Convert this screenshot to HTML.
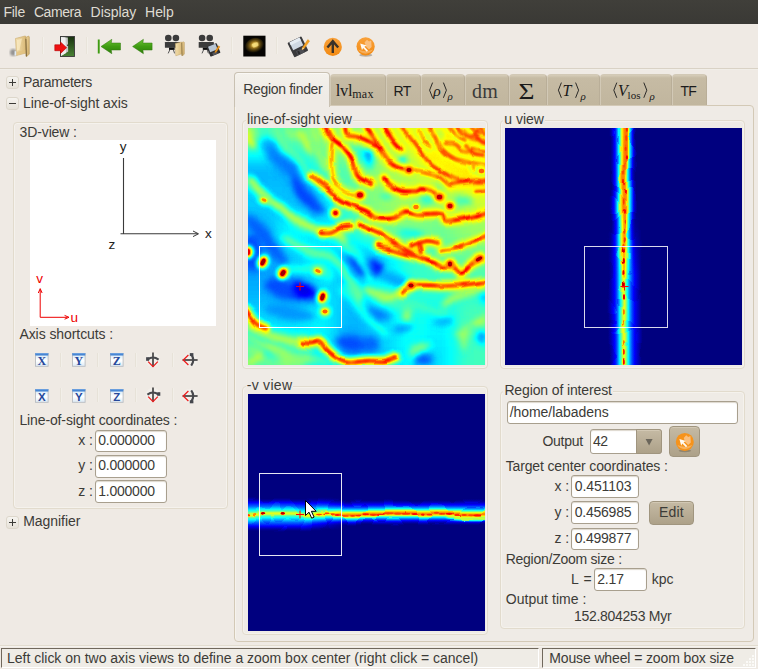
<!DOCTYPE html>
<html><head><meta charset="utf-8"><title>PyMSES</title>
<style>
html,body{margin:0;padding:0}
body{width:758px;height:669px;overflow:hidden;background:#efeae4;font-family:"Liberation Sans",sans-serif;font-size:14px;color:#3c3b37;position:relative}
div,svg{box-sizing:border-box}
.t{position:absolute;white-space:pre;line-height:16px;height:16px}
.abs{position:absolute}
.menubar{position:absolute;left:0;top:0;width:758px;height:24px;background:linear-gradient(#403f3a,#3a3935)}
.tbline{position:absolute;left:0;top:68px;width:758px;height:1px;background:#d9d2c5}
.tbline2{position:absolute;left:0;top:69px;width:758px;height:1px;background:#f1eee8}
.frame{position:absolute;border:1px solid #e2dbcd;border-radius:4px;box-shadow:inset 0 0 0 1px #f5f2ed}
.lblbg{position:absolute;background:#efeae4;height:4px}
.inp{position:absolute;background:#fff;border:1px solid #a89f8e;border-radius:3px;box-shadow:inset 0 1px 1px #ddd8ce}
.exp{position:absolute;width:13px;height:13px;border:1px solid #ddd7cb;border-radius:3px;background:linear-gradient(#f6f4f0,#e6e1d8)}
.exp:before{content:"";position:absolute;left:2px;top:5px;width:7px;height:1px;background:#3c3b37}
.exp.plus:after{content:"";position:absolute;left:5px;top:2px;width:1px;height:7px;background:#3c3b37}
.tab{position:absolute;top:74px;height:31px;background:linear-gradient(#d6cdb9 0,#c6bba4 3px,#c1b69e 100%);border:1px solid #d2c9b6;border-right-color:#b9ae98;border-bottom:none;border-radius:4px 4px 0 0}
.tabact{position:absolute;left:234px;top:72px;width:96px;height:35px;background:linear-gradient(#f4f1eb,#efebe6 70%);border:1px solid #c9c1b2;border-bottom:none;border-radius:4px 4px 0 0;box-shadow:inset 0 1px 0 #faf8f5}
.panel{position:absolute;left:234px;top:105px;width:520px;height:537px;background:#efebe6;border:1px solid #d3c9b6;border-radius:0 4px 4px 4px;box-shadow:inset 1px 0 0 #f6f3ed}
.btn{position:absolute;border:1px solid #a0957f;border-radius:4px;background:linear-gradient(#c5baa4,#ada189);box-shadow:inset 0 1px 0 #d2c8b4}
.sep{position:absolute;width:1px;height:14px;background:#e7e2d8;box-shadow:1px 0 0 #f2efe9}
.status{position:absolute;top:648px;height:20px;border:1px solid #70685c;border-right-color:#fff;border-bottom-color:#fff;background:#efece6}
.hl{position:absolute;left:0;width:758px;height:1px}
</style></head>
<body>

<svg width="0" height="0" style="position:absolute">
 <defs>
  <filter id="jet" x="0" y="0" width="100%" height="100%" color-interpolation-filters="sRGB">
   <feComponentTransfer>
    <feFuncR type="table" tableValues="0 0 0 0 0.5 1 1 1 0.5"/>
    <feFuncG type="table" tableValues="0 0 0.5 1 1 1 0.5 0 0"/>
    <feFuncB type="table" tableValues="0.5 1 1 1 0.5 0 0 0 0"/>
   </feComponentTransfer>
  </filter>
  <filter id="b9" filterUnits="userSpaceOnUse" x="-40" y="-40" width="320" height="320" color-interpolation-filters="sRGB"><feGaussianBlur stdDeviation="10"/></filter>
  <filter id="b6" filterUnits="userSpaceOnUse" x="-40" y="-40" width="320" height="320" color-interpolation-filters="sRGB"><feGaussianBlur stdDeviation="5.5"/></filter>
  <filter id="b4" filterUnits="userSpaceOnUse" x="-40" y="-40" width="320" height="320" color-interpolation-filters="sRGB"><feGaussianBlur stdDeviation="3.2"/></filter>
  <filter id="b2" filterUnits="userSpaceOnUse" x="-40" y="-40" width="320" height="320" color-interpolation-filters="sRGB"><feGaussianBlur stdDeviation="2.0"/></filter>
  <filter id="b1" filterUnits="userSpaceOnUse" x="-40" y="-40" width="320" height="320" color-interpolation-filters="sRGB"><feGaussianBlur stdDeviation="1.0"/></filter>
  <filter id="b05" filterUnits="userSpaceOnUse" x="-40" y="-40" width="320" height="320" color-interpolation-filters="sRGB"><feGaussianBlur stdDeviation="0.7"/></filter>
  <filter id="wob" filterUnits="userSpaceOnUse" x="-40" y="-40" width="320" height="320" color-interpolation-filters="sRGB">
   <feTurbulence type="fractalNoise" baseFrequency="0.05" numOctaves="2" seed="4" result="n"/>
   <feDisplacementMap in="SourceGraphic" in2="n" scale="5" xChannelSelector="R" yChannelSelector="G" result="d"/>
   <feGaussianBlur in="d" stdDeviation="0.55"/>
  </filter>
  <filter id="wob2" filterUnits="userSpaceOnUse" x="-40" y="-40" width="320" height="320" color-interpolation-filters="sRGB">
   <feTurbulence type="fractalNoise" baseFrequency="0.03" numOctaves="2" seed="12" result="n"/>
   <feDisplacementMap in="SourceGraphic" in2="n" scale="10" xChannelSelector="R" yChannelSelector="G" result="d"/>
   <feGaussianBlur in="d" stdDeviation="0.8"/>
  </filter>
  <filter id="wob3" filterUnits="userSpaceOnUse" x="-40" y="-40" width="320" height="320" color-interpolation-filters="sRGB">
   <feTurbulence type="fractalNoise" baseFrequency="0.045" numOctaves="2" seed="21" result="n"/>
   <feDisplacementMap in="SourceGraphic" in2="n" scale="5" xChannelSelector="R" yChannelSelector="G" result="d"/>
   <feGaussianBlur in="d" stdDeviation="0.5"/>
  </filter>
  <filter id="mod" filterUnits="userSpaceOnUse" x="-40" y="-40" width="320" height="320" color-interpolation-filters="sRGB">
   <feTurbulence type="fractalNoise" baseFrequency="0.09" numOctaves="2" seed="9" result="n"/>
   <feColorMatrix in="n" type="matrix" values="0 0 0 0 1  0 0 0 0 1  0 0 0 0 1  3.2 0 0 0 -0.95" result="a"/>
   <feComposite in="SourceGraphic" in2="a" operator="in" result="c"/>
   <feGaussianBlur in="c" stdDeviation="0.9"/>
  </filter>
 </defs>
</svg>
<div class="menubar"></div>
<div class="tbline"></div><div class="tbline2"></div>
<svg width="400" height="44" viewBox="0 24 400 44" style="position:absolute;left:0;top:24px"><defs>
    <linearGradient id="fold" x1="0" y1="0" x2="1" y2="0"><stop offset="0" stop-color="#f3dfae"/><stop offset="1" stop-color="#d9b978"/></linearGradient>
    <linearGradient id="fold2" x1="0" y1="0" x2="1" y2="1"><stop offset="0" stop-color="#efd49a"/><stop offset="1" stop-color="#c9a765"/></linearGradient>
    <linearGradient id="door" x1="0" y1="0" x2="0" y2="1"><stop offset="0" stop-color="#17300f"/><stop offset="1" stop-color="#4a8335"/></linearGradient>
    <linearGradient id="garrow" x1="0" y1="0" x2="0" y2="1"><stop offset="0" stop-color="#6cc235"/><stop offset="0.5" stop-color="#3f9c12"/><stop offset="1" stop-color="#2f7d0c"/></linearGradient>
    <radialGradient id="gal" cx="0.5" cy="0.45" r="0.5"><stop offset="0" stop-color="#e2bd48"/><stop offset="0.35" stop-color="#a57d20"/><stop offset="0.7" stop-color="#4a380c"/><stop offset="1" stop-color="#0a0803"/></radialGradient>
    <linearGradient id="org" x1="0" y1="0" x2="0" y2="1"><stop offset="0" stop-color="#f9a13a"/><stop offset="1" stop-color="#f28a12"/></linearGradient>
    <filter id="tb05"><feGaussianBlur stdDeviation="0.5"/></filter>
    <filter id="tb1"><feGaussianBlur stdDeviation="1"/></filter>
    </defs><path d="M42.5 37v17" stroke="#e9e4da" stroke-width="1"/><path d="M43.5 37v17" stroke="#f3f0ea" stroke-width="1"/><path d="M86.5 37v17" stroke="#e9e4da" stroke-width="1"/><path d="M87.5 37v17" stroke="#f3f0ea" stroke-width="1"/><path d="M231.5 37v17" stroke="#e9e4da" stroke-width="1"/><path d="M232.5 37v17" stroke="#f3f0ea" stroke-width="1"/><path d="M276.5 37v17" stroke="#e9e4da" stroke-width="1"/><path d="M277.5 37v17" stroke="#f3f0ea" stroke-width="1"/><g><ellipse cx="13.2" cy="52.5" rx="3.2" ry="3.4" fill="#777" opacity=".75" filter="url(#tb1)"/><path d="M15.5 38.5 L25 36 L26 36.5 L26 53 L16.5 55.5 Z" fill="url(#fold)" stroke="#c9a96a" stroke-width=".6"/><path d="M26 37.5 L28.5 36 L29.3 37 L29.3 54 L26.5 56.8 L26 56 Z" fill="url(#fold2)" stroke="#b99855" stroke-width=".6"/><path d="M16.2 52 L25.5 49.8 L25.7 53 L16.6 55.2Z" fill="#e2c27f" opacity=".8"/><path d="M25.9 38.8 L26.4 56.4" stroke="#6e5a33" stroke-width=".9"/><path d="M17 40 L22 38.6 L19.5 50 L17 50.6Z" fill="#fff3cf" opacity=".55"/><rect x="14.6" y="51.2" width="1.6" height="4" fill="#dfeaf5"/></g><g><rect x="60.5" y="36.5" width="14" height="20" fill="url(#door)" stroke="#3a3a3a" stroke-width=".9"/><path d="M61 37 L67.8 37.6 L68.2 51.6 L61 56Z" fill="#c9c9c9"/><path d="M61 37 L65.5 37.4 L66 53 L61 56Z" fill="#efefef"/><path d="M67.2 44.5h1.2v1.6h-1.2z" fill="#333"/><path d="M54.8 44.8 H60.5 V42 L66.6 47.7 L60.5 53.5 V50.7 H54.8Z" fill="#ee1111" stroke="#b50000" stroke-width=".6"/></g><rect x="97.8" y="39.5" width="1.9" height="14" fill="#3f9c12"/><path d="M101 46.5 L111.8 39.3 L111.3 43 L120.5 43 L120.5 50 L111.3 50 L111.8 53.7Z" fill="url(#garrow)" stroke="#2e7a0c" stroke-width=".5"/><path d="M132.6 46.5 L143.4 39.3 L142.9 43 L152.1 43 L152.1 50 L142.9 50 L143.4 53.7Z" fill="url(#garrow)" stroke="#2e7a0c" stroke-width=".5"/><g fill="#3b3b3b"><circle cx="168.3" cy="38" r="3.3"/><circle cx="175.9" cy="38" r="3.3"/><rect x="164.9" y="42" width="15.2" height="5.8" rx=".6"/><rect x="169" y="47.6" width="5.6" height="2.3" fill="#0c0c0c"/><path d="M169.8 49.8 l-1.6 3.6 M173.4 49.8 l1.2 3.6" stroke="#555" stroke-width="1" fill="none"/></g><path d="M175.4 43.4 L181.6 42 L181.9 53.8 L175.8 55.8Z" fill="url(#fold)" stroke="#c2a05e" stroke-width=".5"/><path d="M181.8 42.6 L183.6 41.8 L184.3 42.5 L184.3 54 L182.4 56 L181.9 55.4Z" fill="url(#fold2)" stroke="#b39250" stroke-width=".5"/><path d="M181.8 42.8 L182.1 55.6" stroke="#7a653a" stroke-width=".7"/><g fill="#3b3b3b"><circle cx="202.1" cy="38" r="3.3"/><circle cx="209.7" cy="38" r="3.3"/><rect x="198.7" y="42" width="15.2" height="5.8" rx=".6"/><rect x="202.8" y="47.6" width="5.6" height="2.3" fill="#0c0c0c"/><path d="M203.6 49.8 l-1.6 3.6 M207.2 49.8 l1.2 3.6" stroke="#555" stroke-width="1" fill="none"/></g><g transform="rotate(-22 213.5 50)"><rect x="208.2" y="44.6" width="10.8" height="10.6" rx=".8" fill="#2e2e30"/><rect x="209.6" y="45" width="8" height="5.8" fill="#b9c6d4"/><rect x="211.2" y="52.4" width="5" height="2.6" fill="#55565a"/></g><path d="M218.6 45.8 L219.9 46.8 L216.4 52 L214.9 52.8 L215.2 51.1Z" fill="#f39a1c" stroke="#c77508" stroke-width=".4"/><rect x="243.3" y="35.7" width="22.2" height="20.8" fill="#050402"/><ellipse cx="254.6" cy="45.6" rx="9.6" ry="7.6" fill="url(#gal)" transform="rotate(-18 254.6 45.6)"/><ellipse cx="255" cy="44.9" rx="3.4" ry="2.3" fill="#ffe98a" opacity=".8" filter="url(#tb05)" transform="rotate(-20 254.8 44.4)"/><g transform="rotate(-26 298 47)"><rect x="290.2" y="38.8" width="15.5" height="16" rx="1" fill="#3a3a3c"/><rect x="292.3" y="39.2" width="11.2" height="8.6" fill="#cfd8e2"/><rect x="292.3" y="39.2" width="11.2" height="3" fill="#e6ecf2"/><rect x="294.2" y="50" width="7.5" height="4.6" fill="#4e4f54"/><rect x="295.3" y="50.7" width="2" height="3.3" fill="#2c2c2e"/></g><path d="M307.8 39.6 L309.6 41 L304.2 48.6 L302 49.8 L302.5 47.4Z" fill="#f5a021" stroke="#d98a10" stroke-width=".4"/><path d="M302 49.8 L302.5 47.4 L304.2 48.6Z" fill="#f7d9a0"/><circle cx="332.8" cy="46.9" r="9.1" fill="url(#org)"/><path d="M327.4 47.6 L332.8 41.2 L338.2 47.6 M332.8 42 V53" stroke="#3b3228" stroke-width="2.4" fill="none" stroke-linecap="butt" stroke-linejoin="miter"/><ellipse cx="365.8" cy="55.2" rx="6.5" ry="1.6" fill="#8a8175" opacity=".55" filter="url(#tb05)"/><circle cx="365.6" cy="46.4" r="9.1" fill="url(#org)"/><path d="M364.5 42.5 L367 39.8 L369 41.6 L371.2 40.6 L371.6 47 L369 49.6 L366 46.4Z" fill="#fbc48a" opacity=".9"/><path d="M358.2 49.5 a8.6 8.6 0 0 0 14.8 0 q-7.4 3.4 -14.8 0z" fill="#fff" opacity=".28"/><path d="M360.2 43.4 L366.6 45.5 L364.4 46.7 L368 50.6 L366.8 51.8 L363.1 48 L362 50.3Z" fill="#fff" opacity=".95"/></svg>
<div class="exp plus" style="left:6px;top:76px"></div>
<div class="exp" style="left:6px;top:97px"></div>
<div class="exp plus" style="left:6px;top:516px"></div>
<div class="frame" style="left:13px;top:122px;width:215px;height:387px;"></div>
<div class="abs" style="left:30px;top:140.4px;width:186px;height:185.9px;background:#fff"></div>
<svg class="abs" style="left:30px;top:140px" width="187" height="187" viewBox="30 140 187 187">
<path d="M123.5 158V234M120.5 233.8H198" stroke="#3a3a3a" stroke-width="1.1" fill="none"/>
<path d="M193 231 L198.5 233.8 L193 236.6" stroke="#3a3a3a" stroke-width="1" fill="none"/>
<g font-family="Liberation Sans" font-size="13.5" fill="#222">
<text x="119.8" y="151.2">y</text><text x="205" y="238">x</text><text x="108.6" y="248.8">z</text>
<text x="36.2" y="283" fill="#ee0000">v</text><text x="70.6" y="322.2" fill="#ee0000">u</text></g>
<path d="M40.2 290V317.3H67.5" stroke="#ee0000" stroke-width="1" fill="none"/>
<path d="M38.3 293 L40.2 288.6 L42.1 293M64.6 315.4 L69 317.3 L64.6 319.2" stroke="#ee0000" stroke-width="1" fill="none"/>
</svg>
<svg width="14" height="14" viewBox="0 0 14 14" style="position:absolute;left:35px;top:353px"><defs><linearGradient id="xyzg" x1="0" y1="0" x2="0" y2="1"><stop offset="0" stop-color="#cfe6f7"/><stop offset=".55" stop-color="#ffffff"/><stop offset="1" stop-color="#dbeaf6"/></linearGradient></defs><rect x=".5" y=".5" width="12.6" height="12.8" fill="url(#xyzg)" stroke="#b9bcc0" stroke-width=".9"/><rect x=".3" y=".2" width="13" height="2.3" fill="#3f7fd0"/><rect x=".3" y=".2" width="13" height="1" fill="#6ea3e2"/><text x="6.8" y="11.9" text-anchor="middle" font-family="Liberation Serif" font-weight="bold" font-size="12" fill="#27489a">X</text></svg>
<svg width="14" height="14" viewBox="0 0 14 14" style="position:absolute;left:72.3px;top:353px"><defs><linearGradient id="xyzg" x1="0" y1="0" x2="0" y2="1"><stop offset="0" stop-color="#cfe6f7"/><stop offset=".55" stop-color="#ffffff"/><stop offset="1" stop-color="#dbeaf6"/></linearGradient></defs><rect x=".5" y=".5" width="12.6" height="12.8" fill="url(#xyzg)" stroke="#b9bcc0" stroke-width=".9"/><rect x=".3" y=".2" width="13" height="2.3" fill="#3f7fd0"/><rect x=".3" y=".2" width="13" height="1" fill="#6ea3e2"/><text x="6.8" y="11.9" text-anchor="middle" font-family="Liberation Serif" font-weight="bold" font-size="12" fill="#27489a">Y</text></svg>
<svg width="14" height="14" viewBox="0 0 14 14" style="position:absolute;left:109.6px;top:353px"><defs><linearGradient id="xyzg" x1="0" y1="0" x2="0" y2="1"><stop offset="0" stop-color="#cfe6f7"/><stop offset=".55" stop-color="#ffffff"/><stop offset="1" stop-color="#dbeaf6"/></linearGradient></defs><rect x=".5" y=".5" width="12.6" height="12.8" fill="url(#xyzg)" stroke="#b9bcc0" stroke-width=".9"/><rect x=".3" y=".2" width="13" height="2.3" fill="#3f7fd0"/><rect x=".3" y=".2" width="13" height="1" fill="#6ea3e2"/><text x="6.8" y="11.9" text-anchor="middle" font-family="Liberation Serif" font-weight="bold" font-size="12" fill="#27489a">Z</text></svg>
<svg width="18" height="18" viewBox="-9 -9 18 18" style="position:absolute;left:144.3px;top:350.8px"><circle cx="0" cy="0" r="7.3" fill="#f4f1ec" opacity=".7"/><path d="M0 -7.6V6.8" stroke="#2c2c2c" stroke-width="1.5"/><path d="M-5.6 -0.4 Q0 -4.6 5.6 -0.4" stroke="#47484c" stroke-width="2.1" fill="none"/><rect x="-6.9" y="-2.8" width="3" height="3.6" fill="#44464c"/><path d="M-4.8 1.6 L0 6.6 L4.8 1.6" stroke="#ee1c1c" stroke-width="1.25" fill="none"/></svg>
<svg width="18" height="18" viewBox="-9 -9 18 18" style="position:absolute;left:181.3px;top:351px"><circle cx="0" cy="0" r="7.3" fill="#f4f1ec" opacity=".7"/><path d="M-7.4 0H7.6" stroke="#2c2c2c" stroke-width="1.5"/><path d="M1.2 -5.6 Q5.4 0 1.2 5.6" stroke="#47484c" stroke-width="2.1" fill="none"/><rect x="-0.2" y="-6.9" width="3.6" height="3" fill="#44464c"/><path d="M-1.6 -5 L-6.8 0 L-1.6 5" stroke="#ee1c1c" stroke-width="1.25" fill="none"/></svg>
<div class="sep" style="left:59.5px;top:352.8px"></div>
<div class="sep" style="left:96.8px;top:352.8px"></div>
<div class="sep" style="left:134.5px;top:352.8px"></div>
<div class="sep" style="left:171.7px;top:352.8px"></div>
<svg width="14" height="14" viewBox="0 0 14 14" style="position:absolute;left:35px;top:388.6px"><defs><linearGradient id="xyzg" x1="0" y1="0" x2="0" y2="1"><stop offset="0" stop-color="#cfe6f7"/><stop offset=".55" stop-color="#ffffff"/><stop offset="1" stop-color="#dbeaf6"/></linearGradient></defs><rect x=".5" y=".5" width="12.6" height="12.8" fill="url(#xyzg)" stroke="#b9bcc0" stroke-width=".9"/><rect x=".3" y=".2" width="13" height="2.3" fill="#3f7fd0"/><rect x=".3" y=".2" width="13" height="1" fill="#6ea3e2"/><text x="6.8" y="11.9" text-anchor="middle" font-family="Liberation Sans" font-weight="bold" font-size="11.5" fill="#27489a">X</text></svg>
<svg width="14" height="14" viewBox="0 0 14 14" style="position:absolute;left:72.3px;top:388.6px"><defs><linearGradient id="xyzg" x1="0" y1="0" x2="0" y2="1"><stop offset="0" stop-color="#cfe6f7"/><stop offset=".55" stop-color="#ffffff"/><stop offset="1" stop-color="#dbeaf6"/></linearGradient></defs><rect x=".5" y=".5" width="12.6" height="12.8" fill="url(#xyzg)" stroke="#b9bcc0" stroke-width=".9"/><rect x=".3" y=".2" width="13" height="2.3" fill="#3f7fd0"/><rect x=".3" y=".2" width="13" height="1" fill="#6ea3e2"/><text x="6.8" y="11.9" text-anchor="middle" font-family="Liberation Sans" font-weight="bold" font-size="11.5" fill="#27489a">Y</text></svg>
<svg width="14" height="14" viewBox="0 0 14 14" style="position:absolute;left:109.6px;top:388.6px"><defs><linearGradient id="xyzg" x1="0" y1="0" x2="0" y2="1"><stop offset="0" stop-color="#cfe6f7"/><stop offset=".55" stop-color="#ffffff"/><stop offset="1" stop-color="#dbeaf6"/></linearGradient></defs><rect x=".5" y=".5" width="12.6" height="12.8" fill="url(#xyzg)" stroke="#b9bcc0" stroke-width=".9"/><rect x=".3" y=".2" width="13" height="2.3" fill="#3f7fd0"/><rect x=".3" y=".2" width="13" height="1" fill="#6ea3e2"/><text x="6.8" y="11.9" text-anchor="middle" font-family="Liberation Sans" font-weight="bold" font-size="11.5" fill="#27489a">Z</text></svg>
<svg width="18" height="18" viewBox="-9 -9 18 18" style="position:absolute;left:144.3px;top:386.4px"><circle cx="0" cy="0" r="7.3" fill="#f4f1ec" opacity=".7"/><path d="M0 -7.6V6.8" stroke="#2c2c2c" stroke-width="1.5"/><path d="M-5.6 -0.4 Q0 -4.6 5.6 -0.4" stroke="#47484c" stroke-width="2.1" fill="none"/><rect x="4.3" y="-2.8" width="3" height="3.6" fill="#44464c"/><path d="M-4.8 1.6 L0 6.6 L4.8 1.6" stroke="#ee1c1c" stroke-width="1.25" fill="none"/></svg>
<svg width="18" height="18" viewBox="-9 -9 18 18" style="position:absolute;left:181.3px;top:386.6px"><circle cx="0" cy="0" r="7.3" fill="#f4f1ec" opacity=".7"/><path d="M-7.4 0H7.6" stroke="#2c2c2c" stroke-width="1.5"/><path d="M1.2 -5.6 Q5.4 0 1.2 5.6" stroke="#47484c" stroke-width="2.1" fill="none"/><rect x="-0.2" y="4.3" width="3.6" height="3" fill="#44464c"/><path d="M-1.6 -5 L-6.8 0 L-1.6 5" stroke="#ee1c1c" stroke-width="1.25" fill="none"/></svg>
<div class="sep" style="left:59.5px;top:388.4px"></div>
<div class="sep" style="left:96.8px;top:388.4px"></div>
<div class="sep" style="left:134.5px;top:388.4px"></div>
<div class="sep" style="left:171.7px;top:388.4px"></div>
<div class="inp" style="left:94.8px;top:429.8px;width:72px;height:22.7px;"></div>
<div class="inp" style="left:94.8px;top:455px;width:72px;height:22.7px;"></div>
<div class="inp" style="left:94.8px;top:480.2px;width:72px;height:22.7px;"></div>
<div class="panel"></div>
<div class="tab" style="left:329.5px;width:56.5px"></div>
<div class="tab" style="left:385.5px;width:35.8px"></div>
<div class="tab" style="left:420.8px;width:44.2px"></div>
<div class="tab" style="left:464.5px;width:44.8px"></div>
<div class="tab" style="left:508.8px;width:38.7px"></div>
<div class="tab" style="left:547px;width:53.3px"></div>
<div class="tab" style="left:599.8px;width:72.4px"></div>
<div class="tab" style="left:671.7px;width:35.1px"></div>
<div class="tabact"></div>
<svg class="abs" style="left:330px;top:74px" width="380" height="32" viewBox="330 74 380 32">
<g font-family="Liberation Serif" fill="#1a1a1a">
<text x="335.8" y="96" font-size="16.5" letter-spacing="-0.35">lvl</text><text x="352.2" y="98.2" font-size="12" letter-spacing="0.35">max</text>
<text x="433.2" y="95.5" font-size="15.5" font-style="italic">ρ</text><text x="447.6" y="99.6" font-size="11" font-style="italic">ρ</text>
<text x="472" y="97.8" font-size="20" letter-spacing="0.2" fill="#3a3a3a">dm</text>
<text x="518.6" y="98.6" font-size="22.5" textLength="16" lengthAdjust="spacingAndGlyphs">Σ</text>
<text x="562.6" y="96" font-size="16" font-style="italic">T</text><text x="580.6" y="99.6" font-size="11" font-style="italic">ρ</text>
<text x="618" y="96" font-size="16" font-style="italic">V</text><text x="627.6" y="98.6" font-size="11">los</text><text x="649.4" y="99.6" font-size="11" font-style="italic">ρ</text>
</g>
<g stroke="#1a1a1a" stroke-width="0.9" fill="none">
<path d="M432.6 82.6 L429.6 90.2 L432.6 97.8"/><path d="M443.4 82.6 L446.4 90.2 L443.4 97.8"/>
<path d="M561.4 82.6 L558.4 90.2 L561.4 97.8"/><path d="M575.6 82.6 L578.6 90.2 L575.6 97.8"/>
<path d="M616.8 82.6 L613.8 90.2 L616.8 97.8"/><path d="M643.8 82.6 L646.8 90.2 L643.8 97.8"/>
</g></svg>
<div class="frame" style="left:242px;top:120px;width:246px;height:249px;"></div>
<div class="frame" style="left:500px;top:120px;width:245px;height:249px;"></div>
<div class="frame" style="left:242px;top:386px;width:246px;height:249px;"></div>
<div class="frame" style="left:500px;top:391px;width:245px;height:237.5px;"></div>
<div class="abs" style="left:246px;top:119px;width:107px;height:6px;background:#efebe6"></div>
<div class="abs" style="left:503px;top:119px;width:42px;height:6px;background:#efebe6"></div>
<div class="abs" style="left:246px;top:384px;width:47px;height:6px;background:#efebe6"></div>
<div class="abs" style="left:503px;top:389px;width:110px;height:6px;background:#efebe6"></div>
<div class="abs" style="left:248px;top:128px;width:237px;height:237px;overflow:hidden"><svg width="237" height="237" viewBox="0 0 237 237" style="display:block"><g filter="url(#jet)"><rect width="237" height="237" fill="#6b6b6b"/><g filter="url(#b9)"><rect x="-30.1" y="-30.1" width="30.6" height="30.6" fill="#707070"/><rect x="-0.5" y="-30.1" width="30.6" height="30.6" fill="#707070"/><rect x="29.1" y="-30.1" width="30.6" height="30.6" fill="#737373"/><rect x="58.8" y="-30.1" width="30.6" height="30.6" fill="#808080"/><rect x="88.4" y="-30.1" width="30.6" height="30.6" fill="#858585"/><rect x="118.0" y="-30.1" width="30.6" height="30.6" fill="#8c8c8c"/><rect x="147.6" y="-30.1" width="30.6" height="30.6" fill="#999999"/><rect x="177.2" y="-30.1" width="30.6" height="30.6" fill="#a8a8a8"/><rect x="206.9" y="-30.1" width="30.6" height="30.6" fill="#b8b8b8"/><rect x="236.5" y="-30.1" width="30.6" height="30.6" fill="#b8b8b8"/><rect x="-30.1" y="-0.5" width="30.6" height="30.6" fill="#707070"/><rect x="-0.5" y="-0.5" width="30.6" height="30.6" fill="#707070"/><rect x="29.1" y="-0.5" width="30.6" height="30.6" fill="#737373"/><rect x="58.8" y="-0.5" width="30.6" height="30.6" fill="#808080"/><rect x="88.4" y="-0.5" width="30.6" height="30.6" fill="#858585"/><rect x="118.0" y="-0.5" width="30.6" height="30.6" fill="#8c8c8c"/><rect x="147.6" y="-0.5" width="30.6" height="30.6" fill="#999999"/><rect x="177.2" y="-0.5" width="30.6" height="30.6" fill="#a8a8a8"/><rect x="206.9" y="-0.5" width="30.6" height="30.6" fill="#b8b8b8"/><rect x="236.5" y="-0.5" width="30.6" height="30.6" fill="#b8b8b8"/><rect x="-30.1" y="29.1" width="30.6" height="30.6" fill="#4c4c4c"/><rect x="-0.5" y="29.1" width="30.6" height="30.6" fill="#4c4c4c"/><rect x="29.1" y="29.1" width="30.6" height="30.6" fill="#4f4f4f"/><rect x="58.8" y="29.1" width="30.6" height="30.6" fill="#6b6b6b"/><rect x="88.4" y="29.1" width="30.6" height="30.6" fill="#7a7a7a"/><rect x="118.0" y="29.1" width="30.6" height="30.6" fill="#858585"/><rect x="147.6" y="29.1" width="30.6" height="30.6" fill="#8f8f8f"/><rect x="177.2" y="29.1" width="30.6" height="30.6" fill="#9c9c9c"/><rect x="206.9" y="29.1" width="30.6" height="30.6" fill="#a8a8a8"/><rect x="236.5" y="29.1" width="30.6" height="30.6" fill="#a8a8a8"/><rect x="-30.1" y="58.8" width="30.6" height="30.6" fill="#545454"/><rect x="-0.5" y="58.8" width="30.6" height="30.6" fill="#545454"/><rect x="29.1" y="58.8" width="30.6" height="30.6" fill="#4f4f4f"/><rect x="58.8" y="58.8" width="30.6" height="30.6" fill="#545454"/><rect x="88.4" y="58.8" width="30.6" height="30.6" fill="#737373"/><rect x="118.0" y="58.8" width="30.6" height="30.6" fill="#858585"/><rect x="147.6" y="58.8" width="30.6" height="30.6" fill="#8a8a8a"/><rect x="177.2" y="58.8" width="30.6" height="30.6" fill="#878787"/><rect x="206.9" y="58.8" width="30.6" height="30.6" fill="#949494"/><rect x="236.5" y="58.8" width="30.6" height="30.6" fill="#949494"/><rect x="-30.1" y="88.4" width="30.6" height="30.6" fill="#4c4c4c"/><rect x="-0.5" y="88.4" width="30.6" height="30.6" fill="#4c4c4c"/><rect x="29.1" y="88.4" width="30.6" height="30.6" fill="#636363"/><rect x="58.8" y="88.4" width="30.6" height="30.6" fill="#575757"/><rect x="88.4" y="88.4" width="30.6" height="30.6" fill="#6b6b6b"/><rect x="118.0" y="88.4" width="30.6" height="30.6" fill="#7a7a7a"/><rect x="147.6" y="88.4" width="30.6" height="30.6" fill="#808080"/><rect x="177.2" y="88.4" width="30.6" height="30.6" fill="#7a7a7a"/><rect x="206.9" y="88.4" width="30.6" height="30.6" fill="#858585"/><rect x="236.5" y="88.4" width="30.6" height="30.6" fill="#858585"/><rect x="-30.1" y="118.0" width="30.6" height="30.6" fill="#474747"/><rect x="-0.5" y="118.0" width="30.6" height="30.6" fill="#474747"/><rect x="29.1" y="118.0" width="30.6" height="30.6" fill="#525252"/><rect x="58.8" y="118.0" width="30.6" height="30.6" fill="#616161"/><rect x="88.4" y="118.0" width="30.6" height="30.6" fill="#474747"/><rect x="118.0" y="118.0" width="30.6" height="30.6" fill="#525252"/><rect x="147.6" y="118.0" width="30.6" height="30.6" fill="#6b6b6b"/><rect x="177.2" y="118.0" width="30.6" height="30.6" fill="#737373"/><rect x="206.9" y="118.0" width="30.6" height="30.6" fill="#7a7a7a"/><rect x="236.5" y="118.0" width="30.6" height="30.6" fill="#7a7a7a"/><rect x="-30.1" y="147.6" width="30.6" height="30.6" fill="#4c4c4c"/><rect x="-0.5" y="147.6" width="30.6" height="30.6" fill="#4c4c4c"/><rect x="29.1" y="147.6" width="30.6" height="30.6" fill="#424242"/><rect x="58.8" y="147.6" width="30.6" height="30.6" fill="#595959"/><rect x="88.4" y="147.6" width="30.6" height="30.6" fill="#525252"/><rect x="118.0" y="147.6" width="30.6" height="30.6" fill="#666666"/><rect x="147.6" y="147.6" width="30.6" height="30.6" fill="#6b6b6b"/><rect x="177.2" y="147.6" width="30.6" height="30.6" fill="#6b6b6b"/><rect x="206.9" y="147.6" width="30.6" height="30.6" fill="#6b6b6b"/><rect x="236.5" y="147.6" width="30.6" height="30.6" fill="#6b6b6b"/><rect x="-30.1" y="177.2" width="30.6" height="30.6" fill="#575757"/><rect x="-0.5" y="177.2" width="30.6" height="30.6" fill="#575757"/><rect x="29.1" y="177.2" width="30.6" height="30.6" fill="#545454"/><rect x="58.8" y="177.2" width="30.6" height="30.6" fill="#5e5e5e"/><rect x="88.4" y="177.2" width="30.6" height="30.6" fill="#4c4c4c"/><rect x="118.0" y="177.2" width="30.6" height="30.6" fill="#575757"/><rect x="147.6" y="177.2" width="30.6" height="30.6" fill="#666666"/><rect x="177.2" y="177.2" width="30.6" height="30.6" fill="#5e5e5e"/><rect x="206.9" y="177.2" width="30.6" height="30.6" fill="#737373"/><rect x="236.5" y="177.2" width="30.6" height="30.6" fill="#737373"/><rect x="-30.1" y="206.9" width="30.6" height="30.6" fill="#757575"/><rect x="-0.5" y="206.9" width="30.6" height="30.6" fill="#757575"/><rect x="29.1" y="206.9" width="30.6" height="30.6" fill="#707070"/><rect x="58.8" y="206.9" width="30.6" height="30.6" fill="#616161"/><rect x="88.4" y="206.9" width="30.6" height="30.6" fill="#474747"/><rect x="118.0" y="206.9" width="30.6" height="30.6" fill="#525252"/><rect x="147.6" y="206.9" width="30.6" height="30.6" fill="#616161"/><rect x="177.2" y="206.9" width="30.6" height="30.6" fill="#595959"/><rect x="206.9" y="206.9" width="30.6" height="30.6" fill="#707070"/><rect x="236.5" y="206.9" width="30.6" height="30.6" fill="#707070"/><rect x="-30.1" y="236.5" width="30.6" height="30.6" fill="#757575"/><rect x="-0.5" y="236.5" width="30.6" height="30.6" fill="#757575"/><rect x="29.1" y="236.5" width="30.6" height="30.6" fill="#707070"/><rect x="58.8" y="236.5" width="30.6" height="30.6" fill="#616161"/><rect x="88.4" y="236.5" width="30.6" height="30.6" fill="#474747"/><rect x="118.0" y="236.5" width="30.6" height="30.6" fill="#525252"/><rect x="147.6" y="236.5" width="30.6" height="30.6" fill="#616161"/><rect x="177.2" y="236.5" width="30.6" height="30.6" fill="#595959"/><rect x="206.9" y="236.5" width="30.6" height="30.6" fill="#707070"/><rect x="236.5" y="236.5" width="30.6" height="30.6" fill="#707070"/></g><g filter="url(#wob2)"><g filter="url(#b4)"><ellipse cx="45" cy="48" rx="50" ry="6" fill="#3d3d3d" transform="rotate(51 45 48)"/><ellipse cx="58" cy="68" rx="22" ry="6" fill="#303030" transform="rotate(50 58 68)"/><ellipse cx="18" cy="112" rx="34" ry="7" fill="#383838" transform="rotate(50 18 112)"/><ellipse cx="2" cy="125" rx="10" ry="16" fill="#333333"/><ellipse cx="54" cy="163" rx="15" ry="9" fill="#1a1a1a" transform="rotate(15 54 163)"/><ellipse cx="32" cy="160" rx="18" ry="9" fill="#333333" transform="rotate(22 32 160)"/><ellipse cx="40" cy="185" rx="24" ry="6" fill="#454545" transform="rotate(10 40 185)"/><ellipse cx="122" cy="140" rx="14" ry="9" fill="#242424" transform="rotate(10 122 140)"/><ellipse cx="110" cy="131" rx="9" ry="6" fill="#2b2b2b"/><ellipse cx="148" cy="152" rx="16" ry="5" fill="#474747" transform="rotate(12 148 152)"/><ellipse cx="128" cy="186" rx="13" ry="7" fill="#404040"/><ellipse cx="154" cy="200" rx="11" ry="4" fill="#454545"/><ellipse cx="196" cy="193" rx="11" ry="4" fill="#4a4a4a" transform="rotate(-10 196 193)"/><ellipse cx="102" cy="215" rx="16" ry="7.5" fill="#333333" transform="rotate(22 102 215)"/><ellipse cx="122" cy="218" rx="7" ry="7" fill="#383838"/><ellipse cx="177" cy="233" rx="11" ry="5" fill="#333333"/><ellipse cx="235" cy="210" rx="5" ry="7" fill="#424242"/><ellipse cx="236" cy="170" rx="4" ry="7" fill="#4c4c4c"/><ellipse cx="20" cy="230" rx="13" ry="4" fill="#474747" transform="rotate(12 20 230)"/><ellipse cx="121" cy="30" rx="4.5" ry="8" fill="#3d3d3d" transform="rotate(-20 121 30)"/><ellipse cx="154" cy="33" rx="5" ry="3.2" fill="#474747"/><ellipse cx="179" cy="72" rx="7" ry="3.6" fill="#575757"/><ellipse cx="215" cy="72" rx="10" ry="4.5" fill="#6b6b6b"/><ellipse cx="163" cy="106" rx="11" ry="4.5" fill="#616161" transform="rotate(10 163 106)"/><ellipse cx="139" cy="68" rx="8" ry="3.5" fill="#6b6b6b"/><ellipse cx="110" cy="28" rx="5" ry="10" fill="#6b6b6b" transform="rotate(-30 110 28)"/><ellipse cx="100" cy="45" rx="4" ry="7" fill="#737373" transform="rotate(-20 100 45)"/><ellipse cx="192" cy="60" rx="6" ry="3" fill="#737373"/><path d="M0.0 2.0 L6.0 14.0" fill="none" stroke="#a3a3a3" stroke-width="7" stroke-linecap="round" stroke-linejoin="round"/><path d="M26.0 0.0 C28.3 3.7 34.3 13.7 40.0 22.0 C45.7 30.3 56.7 45.3 60.0 50.0" fill="none" stroke="#808080" stroke-width="4.5" stroke-linecap="round" stroke-linejoin="round"/><path d="M52.0 3.0 L61.0 22.0" fill="none" stroke="#9e9e9e" stroke-width="5" stroke-linecap="round" stroke-linejoin="round"/><path d="M64.0 0.0 L70.0 12.0" fill="none" stroke="#8f8f8f" stroke-width="4" stroke-linecap="round" stroke-linejoin="round"/><path d="M0.0 52.0 C3.0 55.2 10.5 65.2 18.0 71.0 C25.5 76.8 36.3 81.7 45.0 87.0 C53.7 92.3 61.7 98.8 70.0 103.0 C78.3 107.2 90.8 110.5 95.0 112.0" fill="none" stroke="#9e9e9e" stroke-width="7" stroke-linecap="round" stroke-linejoin="round"/><path d="M40.0 110.0 C43.3 112.0 52.7 118.3 60.0 122.0 C67.3 125.7 77.3 127.3 84.0 132.0 C90.7 136.7 95.3 143.3 100.0 150.0 C104.7 156.7 110.0 168.3 112.0 172.0" fill="none" stroke="#858585" stroke-width="6" stroke-linecap="round" stroke-linejoin="round"/><path d="M70.0 20.0 L80.0 40.0" fill="none" stroke="#8c8c8c" stroke-width="5" stroke-linecap="round" stroke-linejoin="round"/><path d="M40.0 0.0 L46.0 10.0" fill="none" stroke="#8f8f8f" stroke-width="4" stroke-linecap="round" stroke-linejoin="round"/><path d="M0.0 198.0 C3.3 199.3 12.7 203.7 20.0 206.0 C27.3 208.3 37.3 210.7 44.0 212.0 C50.7 213.3 57.3 213.7 60.0 214.0" fill="none" stroke="#999999" stroke-width="6.5" stroke-linecap="round" stroke-linejoin="round"/><path d="M118.0 163.0 C121.0 163.8 130.3 167.5 136.0 168.0 C141.7 168.5 149.3 166.3 152.0 166.0" fill="none" stroke="#9e9e9e" stroke-width="5.5" stroke-linecap="round" stroke-linejoin="round"/><path d="M163.0 225.0 L181.0 220.0" fill="none" stroke="#9e9e9e" stroke-width="4" stroke-linecap="round" stroke-linejoin="round"/><path d="M226.0 196.0 L238.0 190.0" fill="none" stroke="#9e9e9e" stroke-width="4" stroke-linecap="round" stroke-linejoin="round"/><ellipse cx="157" cy="186" rx="4" ry="4" fill="#999999"/><ellipse cx="215" cy="208" rx="5" ry="5" fill="#9e9e9e"/><path d="M197.0 174.0 C199.3 173.0 204.2 170.5 211.0 168.0 C217.8 165.5 233.5 160.5 238.0 159.0" fill="none" stroke="#a8a8a8" stroke-width="3.6" stroke-linecap="round" stroke-linejoin="round"/><path d="M0.0 222.0 C3.3 223.7 13.3 229.5 20.0 232.0 C26.7 234.5 36.7 236.2 40.0 237.0" fill="none" stroke="#858585" stroke-width="5" stroke-linecap="round" stroke-linejoin="round"/><path d="M60.0 228.0 L80.0 236.0" fill="none" stroke="#808080" stroke-width="4.5" stroke-linecap="round" stroke-linejoin="round"/><path d="M96.0 160.0 C98.3 163.0 103.5 170.5 110.0 178.0 C116.5 185.5 130.8 200.5 135.0 205.0" fill="none" stroke="#737373" stroke-width="5" stroke-linecap="round" stroke-linejoin="round"/><path d="M35.0 142.0 C38.3 141.8 49.0 141.0 55.0 141.0 C61.0 141.0 66.7 140.7 71.0 142.0 C75.3 143.3 79.3 147.8 81.0 149.0" fill="none" stroke="#757575" stroke-width="5" stroke-linecap="round" stroke-linejoin="round"/><path d="M0.0 209.0 C4.7 212.0 19.2 222.3 28.0 227.0 C36.8 231.7 48.8 235.3 53.0 237.0" fill="none" stroke="#858585" stroke-width="5" stroke-linecap="round" stroke-linejoin="round"/><path d="M134.5 169.0 C137.1 168.7 145.8 168.3 150.0 167.0 C154.2 165.7 158.3 162.0 160.0 161.0" fill="none" stroke="#a3a3a3" stroke-width="4" stroke-linecap="round" stroke-linejoin="round"/><path d="M163.0 225.0 L178.0 220.5" fill="none" stroke="#999999" stroke-width="4" stroke-linecap="round" stroke-linejoin="round"/><ellipse cx="217" cy="210" rx="4.5" ry="14" fill="#858585" transform="rotate(8 217 210)"/><ellipse cx="231" cy="193" rx="5" ry="3" fill="#999999" transform="rotate(-30 231 193)"/><path d="M0.0 236.0 L14.0 230.0" fill="none" stroke="#999999" stroke-width="5" stroke-linecap="round" stroke-linejoin="round"/><path d="M20.0 218.0 C23.3 219.3 33.0 223.7 40.0 226.0 C47.0 228.3 58.3 231.0 62.0 232.0" fill="none" stroke="#8f8f8f" stroke-width="4.5" stroke-linecap="round" stroke-linejoin="round"/><path d="M96.0 118.0 C98.7 119.7 107.3 122.7 112.0 128.0 C116.7 133.3 122.0 146.3 124.0 150.0" fill="none" stroke="#808080" stroke-width="5" stroke-linecap="round" stroke-linejoin="round"/><path d="M140.0 176.0 C145.0 176.3 160.0 176.7 170.0 178.0 C180.0 179.3 195.0 183.0 200.0 184.0" fill="none" stroke="#757575" stroke-width="5" stroke-linecap="round" stroke-linejoin="round"/><ellipse cx="222" cy="12" rx="24" ry="16" fill="#adadad" transform="rotate(25 222 12)"/><ellipse cx="200" cy="30" rx="26" ry="9" fill="#a3a3a3" transform="rotate(25 200 30)"/><ellipse cx="232" cy="30" rx="8" ry="14" fill="#a3a3a3"/><ellipse cx="190" cy="8" rx="9" ry="6" fill="#858585" transform="rotate(30 190 8)"/></g></g><g filter="url(#wob)"><g filter="url(#b2)"><path d="M77.0 -2.0 C78.2 0.2 81.0 7.3 84.0 11.0 C87.0 14.7 91.7 16.5 95.0 20.0 C98.3 23.5 101.7 27.5 104.0 32.0 C106.3 36.5 107.2 43.7 109.0 47.0 C110.8 50.3 112.5 50.5 115.0 52.0 C117.5 53.5 122.5 55.3 124.0 56.0" fill="none" stroke="#a8a8a8" stroke-width="10" stroke-linecap="round" stroke-linejoin="round"/><path d="M97.0 -2.0 C97.3 -0.5 97.2 5.2 99.0 7.0 C100.8 8.8 104.5 7.8 108.0 9.0 C111.5 10.2 116.7 12.5 120.0 14.0 C123.3 15.5 126.7 17.3 128.0 18.0" fill="none" stroke="#a8a8a8" stroke-width="9" stroke-linecap="round" stroke-linejoin="round"/><path d="M84.0 16.0 C83.8 19.3 82.7 30.0 83.0 36.0 C83.3 42.0 83.7 47.5 86.0 52.0 C88.3 56.5 92.8 60.3 97.0 63.0 C101.2 65.7 108.7 67.2 111.0 68.0" fill="none" stroke="#949494" stroke-width="9" stroke-linecap="round" stroke-linejoin="round"/><path d="M64.0 48.0 C65.3 49.0 69.2 51.8 72.0 54.0 C74.8 56.2 77.5 58.0 81.0 61.0 C84.5 64.0 88.5 69.0 93.0 72.0 C97.5 75.0 103.5 77.0 108.0 79.0 C112.5 81.0 116.5 82.2 120.0 84.0 C123.5 85.8 124.8 89.0 129.0 90.0 C133.2 91.0 140.2 91.1 145.0 90.0 C149.8 88.9 153.0 84.2 157.5 83.5 C162.0 82.8 166.1 85.6 172.0 86.0 C177.9 86.4 188.8 84.8 193.0 86.0 C197.2 87.2 194.0 92.1 197.0 93.0 C200.0 93.9 206.2 92.3 211.0 91.5 C215.8 90.7 220.9 89.2 225.6 88.0 C230.3 86.8 236.8 84.7 239.0 84.0" fill="none" stroke="#a8a8a8" stroke-width="10" stroke-linecap="round" stroke-linejoin="round"/><path d="M73.5 104.0 C75.2 104.0 80.8 104.8 84.0 104.0 C87.2 103.2 90.0 100.0 93.0 99.0 C96.0 98.0 100.5 98.2 102.0 98.0" fill="none" stroke="#a8a8a8" stroke-width="9" stroke-linecap="round" stroke-linejoin="round"/><path d="M119.0 0.0 C120.7 2.7 125.3 10.3 129.0 16.0 C132.7 21.7 136.8 29.8 141.0 34.0 C145.2 38.2 150.7 39.7 154.0 41.0 C157.3 42.3 159.8 41.8 161.0 42.0" fill="none" stroke="#a8a8a8" stroke-width="10" stroke-linecap="round" stroke-linejoin="round"/><path d="M161.0 42.0 C162.8 42.2 167.2 42.0 172.0 43.0 C176.8 44.0 185.3 45.8 190.0 48.0 C194.7 50.2 198.3 54.7 200.0 56.0" fill="none" stroke="#949494" stroke-width="10.5" stroke-linecap="round" stroke-linejoin="round"/><path d="M136.0 -2.0 C137.5 0.4 142.2 8.6 145.0 12.5 C147.8 16.4 151.7 20.0 153.0 21.5" fill="none" stroke="#a8a8a8" stroke-width="9" stroke-linecap="round" stroke-linejoin="round"/><path d="M152.0 -2.0 C153.8 0.2 159.7 6.8 163.0 11.0 C166.3 15.2 169.0 19.2 172.0 23.0 C175.0 26.8 177.5 30.7 181.0 34.0 C184.5 37.3 188.0 40.0 193.0 43.0 C198.0 46.0 203.3 50.2 211.0 52.0 C218.7 53.8 234.3 53.7 239.0 54.0" fill="none" stroke="#a3a3a3" stroke-width="9" stroke-linecap="round" stroke-linejoin="round"/><path d="M136.0 50.0 C136.8 51.2 138.0 54.8 141.0 57.0 C144.0 59.2 149.5 62.0 154.0 63.0 C158.5 64.0 165.0 63.3 168.0 63.0 C171.0 62.7 169.6 61.0 172.0 61.0 C174.4 61.0 179.2 61.7 182.5 63.0 C185.8 64.3 190.0 68.0 191.5 69.0" fill="none" stroke="#a8a8a8" stroke-width="10" stroke-linecap="round" stroke-linejoin="round"/><path d="M202.0 57.0 C204.2 56.5 208.8 54.8 215.0 54.0 C221.2 53.2 235.0 52.3 239.0 52.0" fill="none" stroke="#a8a8a8" stroke-width="9" stroke-linecap="round" stroke-linejoin="round"/><path d="M112.0 96.0 C113.0 96.7 114.7 98.3 118.0 100.0 C121.3 101.7 127.2 103.5 132.0 106.0 C136.8 108.5 143.3 112.7 147.0 115.0 C150.7 117.3 149.8 117.7 154.0 120.0 C158.2 122.3 166.7 126.7 172.0 129.0 C177.3 131.3 181.8 132.2 186.0 134.0 C190.2 135.8 194.3 139.2 197.0 139.5 C199.7 139.8 200.2 135.4 202.0 136.0 C203.8 136.6 206.2 141.3 208.0 143.0 C209.8 144.7 210.7 146.8 213.0 146.0 C215.3 145.2 218.7 140.6 222.0 138.0 C225.3 135.4 231.2 131.8 233.0 130.5" fill="none" stroke="#a8a8a8" stroke-width="10" stroke-linecap="round" stroke-linejoin="round"/><path d="M129.0 118.0 C133.2 119.2 146.8 123.2 154.0 125.0 C161.2 126.8 169.0 128.3 172.0 129.0" fill="none" stroke="#a8a8a8" stroke-width="9" stroke-linecap="round" stroke-linejoin="round"/><path d="M172.0 116.0 L174.0 124.0" fill="none" stroke="#a8a8a8" stroke-width="8.5" stroke-linecap="round" stroke-linejoin="round"/><path d="M163.0 118.0 C165.7 117.2 174.5 113.5 179.0 113.0 C183.5 112.5 188.2 114.7 190.0 115.0" fill="none" stroke="#a8a8a8" stroke-width="9" stroke-linecap="round" stroke-linejoin="round"/><path d="M205.0 121.0 C206.0 120.5 207.6 119.3 211.0 118.0 C214.4 116.7 220.9 114.7 225.6 113.0 C230.3 111.3 236.8 108.5 239.0 107.6" fill="none" stroke="#a8a8a8" stroke-width="9" stroke-linecap="round" stroke-linejoin="round"/><path d="M193.0 123.0 C195.5 122.7 204.0 122.0 208.0 121.0 C212.0 120.0 215.5 117.7 217.0 117.0" fill="none" stroke="#999999" stroke-width="8.5" stroke-linecap="round" stroke-linejoin="round"/><path d="M154.0 165.0 C155.0 164.2 158.5 161.2 160.0 160.0 C161.5 158.8 160.5 158.0 163.0 157.5 C165.5 157.0 169.0 156.9 175.0 157.0 C181.0 157.1 191.8 158.1 199.0 158.0 C206.2 157.9 211.8 157.2 218.5 156.5 C225.2 155.8 235.6 154.4 239.0 154.0" fill="none" stroke="#a8a8a8" stroke-width="9.5" stroke-linecap="round" stroke-linejoin="round"/><path d="M-2.0 182.0 C-0.5 184.2 3.7 191.9 7.0 195.0 C10.3 198.1 16.2 199.6 18.0 200.5" fill="none" stroke="#a8a8a8" stroke-width="10" stroke-linecap="round" stroke-linejoin="round"/><path d="M54.0 215.0 C55.7 215.1 61.0 215.7 64.0 215.5 C67.0 215.3 69.5 212.9 72.0 214.0 C74.5 215.1 76.0 219.2 79.0 222.0 C82.0 224.8 86.5 228.9 90.0 231.0 C93.5 233.1 95.0 234.3 100.0 234.6 C105.0 234.9 114.0 233.3 120.0 233.0 C126.0 232.7 131.5 233.7 136.0 233.0 C140.5 232.3 145.2 229.7 147.0 229.0" fill="none" stroke="#a8a8a8" stroke-width="10" stroke-linecap="round" stroke-linejoin="round"/><path d="M171.0 2.4 C171.8 4.2 174.0 10.2 176.0 13.0 C178.0 15.8 181.8 18.0 183.0 19.0" fill="none" stroke="#949494" stroke-width="9" stroke-linecap="round" stroke-linejoin="round"/><path d="M181.0 -2.0 C182.2 -0.1 186.0 5.9 188.0 9.6 C190.0 13.3 191.2 17.3 193.0 20.0 C194.8 22.7 196.7 24.2 199.0 26.0 C201.3 27.8 204.0 29.8 207.0 31.0 C210.0 32.2 213.8 32.7 217.0 33.5 C220.2 34.3 222.3 35.1 226.0 36.0 C229.7 36.9 236.8 38.5 239.0 39.0" fill="none" stroke="#9c9c9c" stroke-width="10" stroke-linecap="round" stroke-linejoin="round"/><path d="M197.7 15.5 C199.2 15.7 204.4 15.5 207.0 16.7 C209.6 17.9 211.0 21.5 213.0 22.7 C215.0 23.9 218.0 23.8 219.0 24.0" fill="none" stroke="#9c9c9c" stroke-width="9" stroke-linecap="round" stroke-linejoin="round"/><path d="M224.0 21.5 L239.0 24.0" fill="none" stroke="#949494" stroke-width="8.5" stroke-linecap="round" stroke-linejoin="round"/><path d="M200.0 -2.0 C201.3 -0.3 205.3 5.7 208.0 8.0 C210.7 10.3 214.7 11.3 216.0 12.0" fill="none" stroke="#949494" stroke-width="8.5" stroke-linecap="round" stroke-linejoin="round"/><path d="M214.0 2.0 C215.3 3.3 219.0 8.3 222.0 10.0 C225.0 11.7 229.2 11.0 232.0 12.0 C234.8 13.0 237.8 15.3 239.0 16.0" fill="none" stroke="#999999" stroke-width="8.5" stroke-linecap="round" stroke-linejoin="round"/><path d="M222.0 -2.0 C223.3 -0.8 227.2 3.7 230.0 5.0 C232.8 6.3 237.5 5.8 239.0 6.0" fill="none" stroke="#999999" stroke-width="8.5" stroke-linecap="round" stroke-linejoin="round"/><path d="M225.0 36.0 L226.0 42.0" fill="none" stroke="#8f8f8f" stroke-width="8.5" stroke-linecap="round" stroke-linejoin="round"/><path d="M229.0 63.0 L239.0 62.0" fill="none" stroke="#9e9e9e" stroke-width="8.5" stroke-linecap="round" stroke-linejoin="round"/><path d="M228.0 8.0 C229.0 9.0 232.2 12.8 234.0 14.0 C235.8 15.2 238.2 14.8 239.0 15.0" fill="none" stroke="#a3a3a3" stroke-width="8.5" stroke-linecap="round" stroke-linejoin="round"/><path d="M208.0 -2.0 C209.0 -0.7 211.3 4.3 214.0 6.0 C216.7 7.7 221.3 8.7 224.0 8.0 C226.7 7.3 229.0 3.0 230.0 2.0" fill="none" stroke="#a3a3a3" stroke-width="8.5" stroke-linecap="round" stroke-linejoin="round"/><path d="M218.0 18.0 C219.3 19.3 223.0 24.3 226.0 26.0 C229.0 27.7 234.3 27.7 236.0 28.0" fill="none" stroke="#a1a1a1" stroke-width="8.5" stroke-linecap="round" stroke-linejoin="round"/><path d="M232.0 -2.0 L236.0 6.0" fill="none" stroke="#a3a3a3" stroke-width="8.5" stroke-linecap="round" stroke-linejoin="round"/></g><g filter="url(#b1)"><path d="M77.0 -2.0 C78.2 0.2 81.0 7.3 84.0 11.0 C87.0 14.7 91.7 16.5 95.0 20.0 C98.3 23.5 101.7 27.5 104.0 32.0 C106.3 36.5 107.2 43.7 109.0 47.0 C110.8 50.3 112.5 50.5 115.0 52.0 C117.5 53.5 122.5 55.3 124.0 56.0" fill="none" stroke="#c7c7c7" stroke-width="3.8" stroke-linecap="round" stroke-linejoin="round"/><path d="M97.0 -2.0 C97.3 -0.5 97.2 5.2 99.0 7.0 C100.8 8.8 104.5 7.8 108.0 9.0 C111.5 10.2 116.7 12.5 120.0 14.0 C123.3 15.5 126.7 17.3 128.0 18.0" fill="none" stroke="#c7c7c7" stroke-width="3.5" stroke-linecap="round" stroke-linejoin="round"/><path d="M84.0 16.0 C83.8 19.3 82.7 30.0 83.0 36.0 C83.3 42.0 83.7 47.5 86.0 52.0 C88.3 56.5 92.8 60.3 97.0 63.0 C101.2 65.7 108.7 67.2 111.0 68.0" fill="none" stroke="#b3b3b3" stroke-width="3.2" stroke-linecap="round" stroke-linejoin="round"/><path d="M64.0 48.0 C65.3 49.0 69.2 51.8 72.0 54.0 C74.8 56.2 77.5 58.0 81.0 61.0 C84.5 64.0 88.5 69.0 93.0 72.0 C97.5 75.0 103.5 77.0 108.0 79.0 C112.5 81.0 116.5 82.2 120.0 84.0 C123.5 85.8 124.8 89.0 129.0 90.0 C133.2 91.0 140.2 91.1 145.0 90.0 C149.8 88.9 153.0 84.2 157.5 83.5 C162.0 82.8 166.1 85.6 172.0 86.0 C177.9 86.4 188.8 84.8 193.0 86.0 C197.2 87.2 194.0 92.1 197.0 93.0 C200.0 93.9 206.2 92.3 211.0 91.5 C215.8 90.7 220.9 89.2 225.6 88.0 C230.3 86.8 236.8 84.7 239.0 84.0" fill="none" stroke="#c7c7c7" stroke-width="3.8" stroke-linecap="round" stroke-linejoin="round"/><path d="M73.5 104.0 C75.2 104.0 80.8 104.8 84.0 104.0 C87.2 103.2 90.0 100.0 93.0 99.0 C96.0 98.0 100.5 98.2 102.0 98.0" fill="none" stroke="#c7c7c7" stroke-width="3.6" stroke-linecap="round" stroke-linejoin="round"/><path d="M119.0 0.0 C120.7 2.7 125.3 10.3 129.0 16.0 C132.7 21.7 136.8 29.8 141.0 34.0 C145.2 38.2 150.7 39.7 154.0 41.0 C157.3 42.3 159.8 41.8 161.0 42.0" fill="none" stroke="#c7c7c7" stroke-width="3.8" stroke-linecap="round" stroke-linejoin="round"/><path d="M161.0 42.0 C162.8 42.2 167.2 42.0 172.0 43.0 C176.8 44.0 185.3 45.8 190.0 48.0 C194.7 50.2 198.3 54.7 200.0 56.0" fill="none" stroke="#b3b3b3" stroke-width="4.4" stroke-linecap="round" stroke-linejoin="round"/><path d="M136.0 -2.0 C137.5 0.4 142.2 8.6 145.0 12.5 C147.8 16.4 151.7 20.0 153.0 21.5" fill="none" stroke="#c7c7c7" stroke-width="3.6" stroke-linecap="round" stroke-linejoin="round"/><path d="M152.0 -2.0 C153.8 0.2 159.7 6.8 163.0 11.0 C166.3 15.2 169.0 19.2 172.0 23.0 C175.0 26.8 177.5 30.7 181.0 34.0 C184.5 37.3 188.0 40.0 193.0 43.0 C198.0 46.0 203.3 50.2 211.0 52.0 C218.7 53.8 234.3 53.7 239.0 54.0" fill="none" stroke="#c2c2c2" stroke-width="3.4" stroke-linecap="round" stroke-linejoin="round"/><path d="M136.0 50.0 C136.8 51.2 138.0 54.8 141.0 57.0 C144.0 59.2 149.5 62.0 154.0 63.0 C158.5 64.0 165.0 63.3 168.0 63.0 C171.0 62.7 169.6 61.0 172.0 61.0 C174.4 61.0 179.2 61.7 182.5 63.0 C185.8 64.3 190.0 68.0 191.5 69.0" fill="none" stroke="#c7c7c7" stroke-width="3.8" stroke-linecap="round" stroke-linejoin="round"/><path d="M202.0 57.0 C204.2 56.5 208.8 54.8 215.0 54.0 C221.2 53.2 235.0 52.3 239.0 52.0" fill="none" stroke="#c7c7c7" stroke-width="3.6" stroke-linecap="round" stroke-linejoin="round"/><path d="M112.0 96.0 C113.0 96.7 114.7 98.3 118.0 100.0 C121.3 101.7 127.2 103.5 132.0 106.0 C136.8 108.5 143.3 112.7 147.0 115.0 C150.7 117.3 149.8 117.7 154.0 120.0 C158.2 122.3 166.7 126.7 172.0 129.0 C177.3 131.3 181.8 132.2 186.0 134.0 C190.2 135.8 194.3 139.2 197.0 139.5 C199.7 139.8 200.2 135.4 202.0 136.0 C203.8 136.6 206.2 141.3 208.0 143.0 C209.8 144.7 210.7 146.8 213.0 146.0 C215.3 145.2 218.7 140.6 222.0 138.0 C225.3 135.4 231.2 131.8 233.0 130.5" fill="none" stroke="#c7c7c7" stroke-width="3.8" stroke-linecap="round" stroke-linejoin="round"/><path d="M129.0 118.0 C133.2 119.2 146.8 123.2 154.0 125.0 C161.2 126.8 169.0 128.3 172.0 129.0" fill="none" stroke="#c7c7c7" stroke-width="3.5" stroke-linecap="round" stroke-linejoin="round"/><path d="M172.0 116.0 L174.0 124.0" fill="none" stroke="#c7c7c7" stroke-width="3.3" stroke-linecap="round" stroke-linejoin="round"/><path d="M163.0 118.0 C165.7 117.2 174.5 113.5 179.0 113.0 C183.5 112.5 188.2 114.7 190.0 115.0" fill="none" stroke="#c7c7c7" stroke-width="3.4" stroke-linecap="round" stroke-linejoin="round"/><path d="M205.0 121.0 C206.0 120.5 207.6 119.3 211.0 118.0 C214.4 116.7 220.9 114.7 225.6 113.0 C230.3 111.3 236.8 108.5 239.0 107.6" fill="none" stroke="#c7c7c7" stroke-width="3.4" stroke-linecap="round" stroke-linejoin="round"/><path d="M193.0 123.0 C195.5 122.7 204.0 122.0 208.0 121.0 C212.0 120.0 215.5 117.7 217.0 117.0" fill="none" stroke="#b8b8b8" stroke-width="3.2" stroke-linecap="round" stroke-linejoin="round"/><path d="M154.0 165.0 C155.0 164.2 158.5 161.2 160.0 160.0 C161.5 158.8 160.5 158.0 163.0 157.5 C165.5 157.0 169.0 156.9 175.0 157.0 C181.0 157.1 191.8 158.1 199.0 158.0 C206.2 157.9 211.8 157.2 218.5 156.5 C225.2 155.8 235.6 154.4 239.0 154.0" fill="none" stroke="#c7c7c7" stroke-width="3.5" stroke-linecap="round" stroke-linejoin="round"/><path d="M-2.0 182.0 C-0.5 184.2 3.7 191.9 7.0 195.0 C10.3 198.1 16.2 199.6 18.0 200.5" fill="none" stroke="#c7c7c7" stroke-width="3.7" stroke-linecap="round" stroke-linejoin="round"/><path d="M54.0 215.0 C55.7 215.1 61.0 215.7 64.0 215.5 C67.0 215.3 69.5 212.9 72.0 214.0 C74.5 215.1 76.0 219.2 79.0 222.0 C82.0 224.8 86.5 228.9 90.0 231.0 C93.5 233.1 95.0 234.3 100.0 234.6 C105.0 234.9 114.0 233.3 120.0 233.0 C126.0 232.7 131.5 233.7 136.0 233.0 C140.5 232.3 145.2 229.7 147.0 229.0" fill="none" stroke="#c7c7c7" stroke-width="3.7" stroke-linecap="round" stroke-linejoin="round"/><path d="M171.0 2.4 C171.8 4.2 174.0 10.2 176.0 13.0 C178.0 15.8 181.8 18.0 183.0 19.0" fill="none" stroke="#b3b3b3" stroke-width="4" stroke-linecap="round" stroke-linejoin="round"/><path d="M181.0 -2.0 C182.2 -0.1 186.0 5.9 188.0 9.6 C190.0 13.3 191.2 17.3 193.0 20.0 C194.8 22.7 196.7 24.2 199.0 26.0 C201.3 27.8 204.0 29.8 207.0 31.0 C210.0 32.2 213.8 32.7 217.0 33.5 C220.2 34.3 222.3 35.1 226.0 36.0 C229.7 36.9 236.8 38.5 239.0 39.0" fill="none" stroke="#bababa" stroke-width="4.4" stroke-linecap="round" stroke-linejoin="round"/><path d="M197.7 15.5 C199.2 15.7 204.4 15.5 207.0 16.7 C209.6 17.9 211.0 21.5 213.0 22.7 C215.0 23.9 218.0 23.8 219.0 24.0" fill="none" stroke="#bababa" stroke-width="4" stroke-linecap="round" stroke-linejoin="round"/><path d="M224.0 21.5 L239.0 24.0" fill="none" stroke="#b3b3b3" stroke-width="3.6" stroke-linecap="round" stroke-linejoin="round"/><path d="M200.0 -2.0 C201.3 -0.3 205.3 5.7 208.0 8.0 C210.7 10.3 214.7 11.3 216.0 12.0" fill="none" stroke="#b3b3b3" stroke-width="3.6" stroke-linecap="round" stroke-linejoin="round"/><path d="M214.0 2.0 C215.3 3.3 219.0 8.3 222.0 10.0 C225.0 11.7 229.2 11.0 232.0 12.0 C234.8 13.0 237.8 15.3 239.0 16.0" fill="none" stroke="#b8b8b8" stroke-width="3.6" stroke-linecap="round" stroke-linejoin="round"/><path d="M222.0 -2.0 C223.3 -0.8 227.2 3.7 230.0 5.0 C232.8 6.3 237.5 5.8 239.0 6.0" fill="none" stroke="#b8b8b8" stroke-width="3.4" stroke-linecap="round" stroke-linejoin="round"/><path d="M225.0 36.0 L226.0 42.0" fill="none" stroke="#adadad" stroke-width="4" stroke-linecap="round" stroke-linejoin="round"/><path d="M229.0 63.0 L239.0 62.0" fill="none" stroke="#bdbdbd" stroke-width="3.8" stroke-linecap="round" stroke-linejoin="round"/><path d="M228.0 8.0 C229.0 9.0 232.2 12.8 234.0 14.0 C235.8 15.2 238.2 14.8 239.0 15.0" fill="none" stroke="#c2c2c2" stroke-width="3.6" stroke-linecap="round" stroke-linejoin="round"/><path d="M208.0 -2.0 C209.0 -0.7 211.3 4.3 214.0 6.0 C216.7 7.7 221.3 8.7 224.0 8.0 C226.7 7.3 229.0 3.0 230.0 2.0" fill="none" stroke="#c2c2c2" stroke-width="3.6" stroke-linecap="round" stroke-linejoin="round"/><path d="M218.0 18.0 C219.3 19.3 223.0 24.3 226.0 26.0 C229.0 27.7 234.3 27.7 236.0 28.0" fill="none" stroke="#bfbfbf" stroke-width="3.6" stroke-linecap="round" stroke-linejoin="round"/><path d="M232.0 -2.0 L236.0 6.0" fill="none" stroke="#c2c2c2" stroke-width="3.6" stroke-linecap="round" stroke-linejoin="round"/></g><g filter="url(#mod)"><path d="M77.0 -2.0 C78.2 0.2 81.0 7.3 84.0 11.0 C87.0 14.7 91.7 16.5 95.0 20.0 C98.3 23.5 101.7 27.5 104.0 32.0 C106.3 36.5 107.2 43.7 109.0 47.0 C110.8 50.3 112.5 50.5 115.0 52.0 C117.5 53.5 122.5 55.3 124.0 56.0" fill="none" stroke="#ededed" stroke-width="2.5" stroke-linecap="round" stroke-linejoin="round"/><path d="M97.0 -2.0 C97.3 -0.5 97.2 5.2 99.0 7.0 C100.8 8.8 104.5 7.8 108.0 9.0 C111.5 10.2 116.7 12.5 120.0 14.0 C123.3 15.5 126.7 17.3 128.0 18.0" fill="none" stroke="#e6e6e6" stroke-width="2.2" stroke-linecap="round" stroke-linejoin="round"/><path d="M84.0 16.0 C83.8 19.3 82.7 30.0 83.0 36.0 C83.3 42.0 83.7 47.5 86.0 52.0 C88.3 56.5 92.8 60.3 97.0 63.0 C101.2 65.7 108.7 67.2 111.0 68.0" fill="none" stroke="#c7c7c7" stroke-width="1.9" stroke-linecap="round" stroke-linejoin="round"/><path d="M64.0 48.0 C65.3 49.0 69.2 51.8 72.0 54.0 C74.8 56.2 77.5 58.0 81.0 61.0 C84.5 64.0 88.5 69.0 93.0 72.0 C97.5 75.0 103.5 77.0 108.0 79.0 C112.5 81.0 116.5 82.2 120.0 84.0 C123.5 85.8 124.8 89.0 129.0 90.0 C133.2 91.0 140.2 91.1 145.0 90.0 C149.8 88.9 153.0 84.2 157.5 83.5 C162.0 82.8 166.1 85.6 172.0 86.0 C177.9 86.4 188.8 84.8 193.0 86.0 C197.2 87.2 194.0 92.1 197.0 93.0 C200.0 93.9 206.2 92.3 211.0 91.5 C215.8 90.7 220.9 89.2 225.6 88.0 C230.3 86.8 236.8 84.7 239.0 84.0" fill="none" stroke="#e8e8e8" stroke-width="2.5" stroke-linecap="round" stroke-linejoin="round"/><path d="M73.5 104.0 C75.2 104.0 80.8 104.8 84.0 104.0 C87.2 103.2 90.0 100.0 93.0 99.0 C96.0 98.0 100.5 98.2 102.0 98.0" fill="none" stroke="#e0e0e0" stroke-width="2.3" stroke-linecap="round" stroke-linejoin="round"/><path d="M119.0 0.0 C120.7 2.7 125.3 10.3 129.0 16.0 C132.7 21.7 136.8 29.8 141.0 34.0 C145.2 38.2 150.7 39.7 154.0 41.0 C157.3 42.3 159.8 41.8 161.0 42.0" fill="none" stroke="#ededed" stroke-width="2.5" stroke-linecap="round" stroke-linejoin="round"/><path d="M161.0 42.0 C162.8 42.2 167.2 42.0 172.0 43.0 C176.8 44.0 185.3 45.8 190.0 48.0 C194.7 50.2 198.3 54.7 200.0 56.0" fill="none" stroke="#c7c7c7" stroke-width="3.1" stroke-linecap="round" stroke-linejoin="round"/><path d="M136.0 -2.0 C137.5 0.4 142.2 8.6 145.0 12.5 C147.8 16.4 151.7 20.0 153.0 21.5" fill="none" stroke="#e8e8e8" stroke-width="2.3" stroke-linecap="round" stroke-linejoin="round"/><path d="M152.0 -2.0 C153.8 0.2 159.7 6.8 163.0 11.0 C166.3 15.2 169.0 19.2 172.0 23.0 C175.0 26.8 177.5 30.7 181.0 34.0 C184.5 37.3 188.0 40.0 193.0 43.0 C198.0 46.0 203.3 50.2 211.0 52.0 C218.7 53.8 234.3 53.7 239.0 54.0" fill="none" stroke="#d6d6d6" stroke-width="2.1" stroke-linecap="round" stroke-linejoin="round"/><path d="M136.0 50.0 C136.8 51.2 138.0 54.8 141.0 57.0 C144.0 59.2 149.5 62.0 154.0 63.0 C158.5 64.0 165.0 63.3 168.0 63.0 C171.0 62.7 169.6 61.0 172.0 61.0 C174.4 61.0 179.2 61.7 182.5 63.0 C185.8 64.3 190.0 68.0 191.5 69.0" fill="none" stroke="#ebebeb" stroke-width="2.5" stroke-linecap="round" stroke-linejoin="round"/><path d="M202.0 57.0 C204.2 56.5 208.8 54.8 215.0 54.0 C221.2 53.2 235.0 52.3 239.0 52.0" fill="none" stroke="#e0e0e0" stroke-width="2.3" stroke-linecap="round" stroke-linejoin="round"/><path d="M112.0 96.0 C113.0 96.7 114.7 98.3 118.0 100.0 C121.3 101.7 127.2 103.5 132.0 106.0 C136.8 108.5 143.3 112.7 147.0 115.0 C150.7 117.3 149.8 117.7 154.0 120.0 C158.2 122.3 166.7 126.7 172.0 129.0 C177.3 131.3 181.8 132.2 186.0 134.0 C190.2 135.8 194.3 139.2 197.0 139.5 C199.7 139.8 200.2 135.4 202.0 136.0 C203.8 136.6 206.2 141.3 208.0 143.0 C209.8 144.7 210.7 146.8 213.0 146.0 C215.3 145.2 218.7 140.6 222.0 138.0 C225.3 135.4 231.2 131.8 233.0 130.5" fill="none" stroke="#e8e8e8" stroke-width="2.5" stroke-linecap="round" stroke-linejoin="round"/><path d="M129.0 118.0 C133.2 119.2 146.8 123.2 154.0 125.0 C161.2 126.8 169.0 128.3 172.0 129.0" fill="none" stroke="#e0e0e0" stroke-width="2.2" stroke-linecap="round" stroke-linejoin="round"/><path d="M172.0 116.0 L174.0 124.0" fill="none" stroke="#dbdbdb" stroke-width="2" stroke-linecap="round" stroke-linejoin="round"/><path d="M163.0 118.0 C165.7 117.2 174.5 113.5 179.0 113.0 C183.5 112.5 188.2 114.7 190.0 115.0" fill="none" stroke="#dbdbdb" stroke-width="2.1" stroke-linecap="round" stroke-linejoin="round"/><path d="M205.0 121.0 C206.0 120.5 207.6 119.3 211.0 118.0 C214.4 116.7 220.9 114.7 225.6 113.0 C230.3 111.3 236.8 108.5 239.0 107.6" fill="none" stroke="#dbdbdb" stroke-width="2.1" stroke-linecap="round" stroke-linejoin="round"/><path d="M193.0 123.0 C195.5 122.7 204.0 122.0 208.0 121.0 C212.0 120.0 215.5 117.7 217.0 117.0" fill="none" stroke="#cccccc" stroke-width="1.9" stroke-linecap="round" stroke-linejoin="round"/><path d="M154.0 165.0 C155.0 164.2 158.5 161.2 160.0 160.0 C161.5 158.8 160.5 158.0 163.0 157.5 C165.5 157.0 169.0 156.9 175.0 157.0 C181.0 157.1 191.8 158.1 199.0 158.0 C206.2 157.9 211.8 157.2 218.5 156.5 C225.2 155.8 235.6 154.4 239.0 154.0" fill="none" stroke="#e0e0e0" stroke-width="2.2" stroke-linecap="round" stroke-linejoin="round"/><path d="M-2.0 182.0 C-0.5 184.2 3.7 191.9 7.0 195.0 C10.3 198.1 16.2 199.6 18.0 200.5" fill="none" stroke="#e6e6e6" stroke-width="2.4" stroke-linecap="round" stroke-linejoin="round"/><path d="M54.0 215.0 C55.7 215.1 61.0 215.7 64.0 215.5 C67.0 215.3 69.5 212.9 72.0 214.0 C74.5 215.1 76.0 219.2 79.0 222.0 C82.0 224.8 86.5 228.9 90.0 231.0 C93.5 233.1 95.0 234.3 100.0 234.6 C105.0 234.9 114.0 233.3 120.0 233.0 C126.0 232.7 131.5 233.7 136.0 233.0 C140.5 232.3 145.2 229.7 147.0 229.0" fill="none" stroke="#e0e0e0" stroke-width="2.4" stroke-linecap="round" stroke-linejoin="round"/><path d="M171.0 2.4 C171.8 4.2 174.0 10.2 176.0 13.0 C178.0 15.8 181.8 18.0 183.0 19.0" fill="none" stroke="#c7c7c7" stroke-width="2.7" stroke-linecap="round" stroke-linejoin="round"/><path d="M181.0 -2.0 C182.2 -0.1 186.0 5.9 188.0 9.6 C190.0 13.3 191.2 17.3 193.0 20.0 C194.8 22.7 196.7 24.2 199.0 26.0 C201.3 27.8 204.0 29.8 207.0 31.0 C210.0 32.2 213.8 32.7 217.0 33.5 C220.2 34.3 222.3 35.1 226.0 36.0 C229.7 36.9 236.8 38.5 239.0 39.0" fill="none" stroke="#cfcfcf" stroke-width="3.1" stroke-linecap="round" stroke-linejoin="round"/><path d="M197.7 15.5 C199.2 15.7 204.4 15.5 207.0 16.7 C209.6 17.9 211.0 21.5 213.0 22.7 C215.0 23.9 218.0 23.8 219.0 24.0" fill="none" stroke="#cfcfcf" stroke-width="2.7" stroke-linecap="round" stroke-linejoin="round"/><path d="M224.0 21.5 L239.0 24.0" fill="none" stroke="#c7c7c7" stroke-width="2.3" stroke-linecap="round" stroke-linejoin="round"/><path d="M200.0 -2.0 C201.3 -0.3 205.3 5.7 208.0 8.0 C210.7 10.3 214.7 11.3 216.0 12.0" fill="none" stroke="#c7c7c7" stroke-width="2.3" stroke-linecap="round" stroke-linejoin="round"/><path d="M214.0 2.0 C215.3 3.3 219.0 8.3 222.0 10.0 C225.0 11.7 229.2 11.0 232.0 12.0 C234.8 13.0 237.8 15.3 239.0 16.0" fill="none" stroke="#cccccc" stroke-width="2.3" stroke-linecap="round" stroke-linejoin="round"/><path d="M222.0 -2.0 C223.3 -0.8 227.2 3.7 230.0 5.0 C232.8 6.3 237.5 5.8 239.0 6.0" fill="none" stroke="#cccccc" stroke-width="2.1" stroke-linecap="round" stroke-linejoin="round"/><path d="M225.0 36.0 L226.0 42.0" fill="none" stroke="#c2c2c2" stroke-width="2.7" stroke-linecap="round" stroke-linejoin="round"/><path d="M229.0 63.0 L239.0 62.0" fill="none" stroke="#d1d1d1" stroke-width="2.5" stroke-linecap="round" stroke-linejoin="round"/><path d="M228.0 8.0 C229.0 9.0 232.2 12.8 234.0 14.0 C235.8 15.2 238.2 14.8 239.0 15.0" fill="none" stroke="#d6d6d6" stroke-width="2.3" stroke-linecap="round" stroke-linejoin="round"/><path d="M208.0 -2.0 C209.0 -0.7 211.3 4.3 214.0 6.0 C216.7 7.7 221.3 8.7 224.0 8.0 C226.7 7.3 229.0 3.0 230.0 2.0" fill="none" stroke="#d6d6d6" stroke-width="2.3" stroke-linecap="round" stroke-linejoin="round"/><path d="M218.0 18.0 C219.3 19.3 223.0 24.3 226.0 26.0 C229.0 27.7 234.3 27.7 236.0 28.0" fill="none" stroke="#d4d4d4" stroke-width="2.3" stroke-linecap="round" stroke-linejoin="round"/><path d="M232.0 -2.0 L236.0 6.0" fill="none" stroke="#d6d6d6" stroke-width="2.3" stroke-linecap="round" stroke-linejoin="round"/></g></g><g filter="url(#b2)"><ellipse cx="87.5" cy="85" rx="5.4" ry="5.4" fill="#a8a8a8"/><ellipse cx="112" cy="67" rx="6.2" ry="5.8" fill="#a8a8a8"/><ellipse cx="161" cy="42" rx="5.8" ry="5.4" fill="#a8a8a8"/><ellipse cx="191.5" cy="69" rx="6" ry="5.6" fill="#a8a8a8"/><ellipse cx="202" cy="78" rx="5.8" ry="5.6" fill="#a8a8a8"/><ellipse cx="16" cy="72" rx="6" ry="4.8" fill="#808080" transform="rotate(20 16 72)"/><ellipse cx="0" cy="124" rx="5.3" ry="6.3" fill="#a8a8a8"/><ellipse cx="15" cy="134" rx="5.3" ry="7" fill="#a8a8a8" transform="rotate(25 15 134)"/><ellipse cx="35" cy="145" rx="5.5" ry="6.5" fill="#a8a8a8" transform="rotate(30 35 145)"/><ellipse cx="70" cy="143" rx="6.2" ry="5" fill="#858585" transform="rotate(20 70 143)"/><ellipse cx="74.5" cy="169" rx="5.3" ry="6.8" fill="#a8a8a8" transform="rotate(15 74.5 169)"/><ellipse cx="77" cy="183.5" rx="5.8" ry="5.2" fill="#8a8a8a"/><ellipse cx="163" cy="157.5" rx="5.8" ry="5.4" fill="#a8a8a8"/><ellipse cx="202" cy="136" rx="5.4" ry="5.8" fill="#a8a8a8"/><ellipse cx="231" cy="131" rx="6.8" ry="5" fill="#a8a8a8" transform="rotate(-30 231 131)"/><ellipse cx="233.5" cy="43" rx="6" ry="5.5" fill="#8a8a8a"/><ellipse cx="168" cy="79" rx="6" ry="5.5" fill="#858585"/></g><g filter="url(#b1)"><ellipse cx="87.5" cy="85" rx="3.4" ry="3.4" fill="#c7c7c7"/><ellipse cx="112" cy="67" rx="4.2" ry="3.8" fill="#cccccc"/><ellipse cx="161" cy="42" rx="3.8" ry="3.4" fill="#cccccc"/><ellipse cx="191.5" cy="69" rx="4" ry="3.6" fill="#cccccc"/><ellipse cx="202" cy="78" rx="3.8" ry="3.6" fill="#cccccc"/><ellipse cx="16" cy="72" rx="4" ry="2.8" fill="#9e9e9e" transform="rotate(20 16 72)"/><ellipse cx="0" cy="124" rx="3.3" ry="4.3" fill="#c7c7c7"/><ellipse cx="15" cy="134" rx="3.3" ry="5" fill="#cccccc" transform="rotate(25 15 134)"/><ellipse cx="35" cy="145" rx="3.5" ry="4.5" fill="#cccccc" transform="rotate(30 35 145)"/><ellipse cx="70" cy="143" rx="4.2" ry="3" fill="#a3a3a3" transform="rotate(20 70 143)"/><ellipse cx="74.5" cy="169" rx="3.3" ry="4.8" fill="#cccccc" transform="rotate(15 74.5 169)"/><ellipse cx="77" cy="183.5" rx="3.8" ry="3.2" fill="#a8a8a8"/><ellipse cx="163" cy="157.5" rx="3.8" ry="3.4" fill="#cccccc"/><ellipse cx="202" cy="136" rx="3.4" ry="3.8" fill="#cccccc"/><ellipse cx="231" cy="131" rx="4.8" ry="3" fill="#cccccc" transform="rotate(-30 231 131)"/><ellipse cx="233.5" cy="43" rx="4" ry="3.5" fill="#a8a8a8"/><ellipse cx="168" cy="79" rx="4" ry="3.5" fill="#a3a3a3"/></g><g filter="url(#b05)"><ellipse cx="87.5" cy="85" rx="2.1" ry="2.1" fill="#e6e6e6"/><ellipse cx="112" cy="67" rx="2.9" ry="2.5" fill="#ebebeb"/><ellipse cx="161" cy="42" rx="2.5" ry="2.1" fill="#f7f7f7"/><ellipse cx="191.5" cy="69" rx="2.7" ry="2.3" fill="#f0f0f0"/><ellipse cx="202" cy="78" rx="2.5" ry="2.3" fill="#f0f0f0"/><ellipse cx="16" cy="72" rx="2.7" ry="1.5" fill="#bdbdbd" transform="rotate(20 16 72)"/><ellipse cx="0" cy="124" rx="2" ry="3" fill="#e6e6e6"/><ellipse cx="15" cy="134" rx="2" ry="3.7" fill="#f7f7f7" transform="rotate(25 15 134)"/><ellipse cx="35" cy="145" rx="2.2" ry="3.2" fill="#f7f7f7" transform="rotate(30 35 145)"/><ellipse cx="70" cy="143" rx="2.9" ry="1.7" fill="#c2c2c2" transform="rotate(20 70 143)"/><ellipse cx="74.5" cy="169" rx="2" ry="3.5" fill="#f7f7f7" transform="rotate(15 74.5 169)"/><ellipse cx="77" cy="183.5" rx="2.5" ry="1.9" fill="#c7c7c7"/><ellipse cx="163" cy="157.5" rx="2.5" ry="2.1" fill="#f7f7f7"/><ellipse cx="202" cy="136" rx="2.1" ry="2.5" fill="#f7f7f7"/><ellipse cx="231" cy="131" rx="3.5" ry="1.7" fill="#f7f7f7" transform="rotate(-30 231 131)"/><ellipse cx="233.5" cy="43" rx="2.7" ry="2.2" fill="#c7c7c7"/><ellipse cx="168" cy="79" rx="2.7" ry="2.2" fill="#c2c2c2"/></g></g><rect x="11.5" y="118.5" width="82" height="81" fill="none" stroke="#fff" stroke-width="1"/><path d="M48 158.5h8M52 154.5v8" stroke="#ff0000" stroke-width="1" fill="none"/></svg></div>
<div class="abs" style="left:505px;top:128px;width:237px;height:237px;overflow:hidden"><svg width="238" height="237" viewBox="0 0 238 237" style="display:block"><defs><linearGradient id="ug1" gradientUnits="userSpaceOnUse" x1="90" y1="0" x2="150" y2="0"><stop offset="0.2550" stop-color="#000000"/><stop offset="0.2883" stop-color="#0a0a0a"/><stop offset="0.3167" stop-color="#1a1a1a"/><stop offset="0.3433" stop-color="#292929"/><stop offset="0.3667" stop-color="#404040"/><stop offset="0.3867" stop-color="#575757"/><stop offset="0.4033" stop-color="#707070"/><stop offset="0.4183" stop-color="#8a8a8a"/><stop offset="0.4333" stop-color="#9e9e9e"/><stop offset="0.4533" stop-color="#b2b2b2"/><stop offset="0.4833" stop-color="#bdbdbd"/><stop offset="0.5067" stop-color="#b8b8b8"/><stop offset="0.5233" stop-color="#a8a8a8"/><stop offset="0.5383" stop-color="#8f8f8f"/><stop offset="0.5550" stop-color="#707070"/><stop offset="0.5717" stop-color="#575757"/><stop offset="0.5933" stop-color="#404040"/><stop offset="0.6167" stop-color="#292929"/><stop offset="0.6400" stop-color="#141414"/><stop offset="0.6633" stop-color="#080808"/><stop offset="0.6883" stop-color="#000000"/></linearGradient><linearGradient id="ug2" gradientUnits="userSpaceOnUse" x1="90" y1="0" x2="150" y2="0"><stop offset="0.2183" stop-color="#000000"/><stop offset="0.2600" stop-color="#0a0a0a"/><stop offset="0.3100" stop-color="#1a1a1a"/><stop offset="0.3517" stop-color="#2b2b2b"/><stop offset="0.3817" stop-color="#424242"/><stop offset="0.4033" stop-color="#575757"/><stop offset="0.4250" stop-color="#6b6b6b"/><stop offset="0.4467" stop-color="#808080"/><stop offset="0.4667" stop-color="#949494"/><stop offset="0.4850" stop-color="#9e9e9e"/><stop offset="0.5033" stop-color="#949494"/><stop offset="0.5233" stop-color="#808080"/><stop offset="0.5433" stop-color="#6b6b6b"/><stop offset="0.5650" stop-color="#575757"/><stop offset="0.5883" stop-color="#454545"/><stop offset="0.6217" stop-color="#303030"/><stop offset="0.6683" stop-color="#1c1c1c"/><stop offset="0.7267" stop-color="#0d0d0d"/><stop offset="0.7767" stop-color="#000000"/></linearGradient><linearGradient id="ufade" gradientUnits="userSpaceOnUse" x1="0" y1="0" x2="0" y2="237"><stop offset="0.35" stop-color="#fff" stop-opacity="0"/><stop offset="0.62" stop-color="#fff" stop-opacity="1"/></linearGradient><mask id="um" maskUnits="userSpaceOnUse" x="-30" y="-30" width="300" height="300"><rect x="-30" y="-30" width="300" height="300" fill="url(#ufade)"/></mask></defs><g filter="url(#jet)"><rect width="238" height="237" fill="#000"/><g filter="url(#wob3)"><rect x="90" y="-14" width="60" height="265" fill="url(#ug1)"/><rect x="90" y="-14" width="60" height="265" fill="url(#ug2)" mask="url(#um)"/><g filter="url(#b1)"><path d="M120.6 -5.0 C120.6 0.0 120.6 16.7 120.4 25.0 C120.1 33.3 119.3 41.7 119.1 45.0" fill="none" stroke="#c7c7c7" stroke-width="3.2" stroke-linecap="round" stroke-linejoin="round"/><path d="M118.8 40.0 C118.7 43.7 118.1 52.0 118.2 62.0 C118.3 72.0 119.3 88.7 119.4 100.0 C119.5 111.3 118.9 121.7 118.8 130.0 C118.7 138.3 119.0 146.7 119.0 150.0" fill="none" stroke="#c2c2c2" stroke-width="1.8" stroke-linecap="round" stroke-linejoin="round"/></g><g filter="url(#b05)"><ellipse cx="120.886" cy="0" rx="0.98626" ry="3.13095" fill="#d7d7d7"/><ellipse cx="120.268" cy="9.42099" rx="1.05195" ry="3.46846" fill="#d0d0d0"/><ellipse cx="119.636" cy="20.7326" rx="1.12386" ry="2.23531" fill="#d2d2d2"/><ellipse cx="120.947" cy="29.3767" rx="1.06157" ry="2.1047" fill="#e0e0e0"/><ellipse cx="119.093" cy="37.4351" rx="0.82382" ry="2.39374" fill="#cccccc"/><ellipse cx="118.996" cy="44.0998" rx="0.976212" ry="2.60486" fill="#cdcdcd"/><ellipse cx="119.05" cy="54.0795" rx="1.06498" ry="3.29781" fill="#d9d9d9"/><ellipse cx="119.794" cy="63.5735" rx="1.13609" ry="2.69541" fill="#e0e0e0"/><ellipse cx="118.734" cy="73.1104" rx="0.828089" ry="2.78819" fill="#d1d1d1"/><ellipse cx="118.88" cy="83.0774" rx="1.18322" ry="3.001" fill="#dddddd"/><ellipse cx="119.665" cy="93.7921" rx="0.987995" ry="2.00136" fill="#d0d0d0"/><ellipse cx="119.244" cy="103.306" rx="1.1114" ry="2.99356" fill="#cdcdcd"/><ellipse cx="119.746" cy="111.409" rx="1.10322" ry="2.21786" fill="#d3d3d3"/><ellipse cx="118.39" cy="117.432" rx="1.11881" ry="2.61597" fill="#cecece"/><ellipse cx="118.8" cy="123" rx="1.1" ry="3" fill="#ebebeb"/><ellipse cx="118.8" cy="134" rx="1.1" ry="3" fill="#ebebeb"/><ellipse cx="118.4" cy="145" rx="1.1" ry="3" fill="#e6e6e6"/><ellipse cx="119" cy="157" rx="1.1" ry="3" fill="#f2f2f2"/><ellipse cx="119" cy="169" rx="1.1" ry="3" fill="#e6e6e6"/><ellipse cx="118.8" cy="184" rx="1.1" ry="3" fill="#c2c2c2"/><ellipse cx="118.8" cy="195" rx="1.1" ry="3" fill="#c2c2c2"/><ellipse cx="118.8" cy="215" rx="1.1" ry="3" fill="#c2c2c2"/><ellipse cx="118.8" cy="224" rx="1.1" ry="3" fill="#d6d6d6"/><ellipse cx="118.8" cy="233" rx="1.1" ry="3" fill="#e0e0e0"/></g></g></g><rect x="79.5" y="118.5" width="83" height="81" fill="none" stroke="#fff" stroke-width="1" opacity=".85"/><path d="M115.5 158.5h8M119.5 154.5v8" stroke="#ff0000" stroke-width="1" fill="none"/></svg></div>
<div class="abs" style="left:248px;top:394px;width:237px;height:237px;overflow:hidden"><svg width="237" height="237" viewBox="0 0 237 237" style="display:block"><defs><linearGradient id="vg1" gradientUnits="userSpaceOnUse" x1="0" y1="90" x2="0" y2="150"><stop offset="0.2317" stop-color="#000000"/><stop offset="0.2650" stop-color="#0a0a0a"/><stop offset="0.2983" stop-color="#1a1a1a"/><stop offset="0.3317" stop-color="#292929"/><stop offset="0.3683" stop-color="#383838"/><stop offset="0.4033" stop-color="#4c4c4c"/><stop offset="0.4300" stop-color="#5c5c5c"/><stop offset="0.4533" stop-color="#6b6b6b"/><stop offset="0.4717" stop-color="#7a7a7a"/><stop offset="0.4883" stop-color="#8f8f8f"/><stop offset="0.5067" stop-color="#999999"/><stop offset="0.5250" stop-color="#8f8f8f"/><stop offset="0.5417" stop-color="#7a7a7a"/><stop offset="0.5600" stop-color="#6b6b6b"/><stop offset="0.5833" stop-color="#5c5c5c"/><stop offset="0.6100" stop-color="#4c4c4c"/><stop offset="0.6450" stop-color="#383838"/><stop offset="0.6817" stop-color="#292929"/><stop offset="0.7150" stop-color="#1a1a1a"/><stop offset="0.7483" stop-color="#0a0a0a"/><stop offset="0.7817" stop-color="#000000"/></linearGradient><linearGradient id="vg2" gradientUnits="userSpaceOnUse" x1="0" y1="90" x2="0" y2="150"><stop offset="0.2667" stop-color="#000000"/><stop offset="0.3000" stop-color="#0a0a0a"/><stop offset="0.3333" stop-color="#1a1a1a"/><stop offset="0.3667" stop-color="#2b2b2b"/><stop offset="0.3917" stop-color="#404040"/><stop offset="0.4133" stop-color="#545454"/><stop offset="0.4300" stop-color="#6b6b6b"/><stop offset="0.4467" stop-color="#858585"/><stop offset="0.4633" stop-color="#9e9e9e"/><stop offset="0.4833" stop-color="#b8b8b8"/><stop offset="0.5067" stop-color="#bfbfbf"/><stop offset="0.5267" stop-color="#adadad"/><stop offset="0.5417" stop-color="#949494"/><stop offset="0.5567" stop-color="#757575"/><stop offset="0.5733" stop-color="#595959"/><stop offset="0.5933" stop-color="#404040"/><stop offset="0.6200" stop-color="#262626"/><stop offset="0.6500" stop-color="#0f0f0f"/><stop offset="0.6833" stop-color="#000000"/></linearGradient><linearGradient id="vfade" gradientUnits="userSpaceOnUse" x1="0" y1="0" x2="237" y2="0"><stop offset="0.22" stop-color="#fff" stop-opacity="0"/><stop offset="0.42" stop-color="#fff" stop-opacity="1"/></linearGradient><mask id="vm" maskUnits="userSpaceOnUse" x="-30" y="-30" width="300" height="300"><rect x="-30" y="-30" width="300" height="300" fill="url(#vfade)"/></mask></defs><g filter="url(#jet)"><rect width="237" height="237" fill="#000"/><g filter="url(#wob3)"><rect x="-14" y="90" width="265" height="60" fill="url(#vg1)"/><rect x="-14" y="90" width="265" height="60" fill="url(#vg2)" mask="url(#vm)"/><g filter="url(#b1)"><path d="M200.0 123.0 C202.5 123.2 208.3 124.1 215.0 124.4 C221.7 124.7 235.8 124.8 240.0 124.9" fill="none" stroke="#999999" stroke-width="3.5" stroke-linecap="round" stroke-linejoin="round"/></g><g filter="url(#b05)"><ellipse cx="15" cy="120.4" rx="2.2" ry="1.3" fill="#f2f2f2"/><ellipse cx="34.8" cy="120.4" rx="2.2" ry="1.3" fill="#f2f2f2"/><ellipse cx="-1" cy="120.4" rx="2.2" ry="1.3" fill="#d1d1d1"/><ellipse cx="6" cy="120.4" rx="2.2" ry="1.3" fill="#bdbdbd"/><ellipse cx="70" cy="120.611" rx="3.10673" ry="0.828975" fill="#cfcfcf"/><ellipse cx="77.3464" cy="120.41" rx="3.22393" ry="0.814998" fill="#cdcdcd"/><ellipse cx="84.5224" cy="120.294" rx="2.3956" ry="1.13074" fill="#cecece"/><ellipse cx="89.2887" cy="121.027" rx="2.82507" ry="1.03084" fill="#d9d9d9"/><ellipse cx="95.6972" cy="120.902" rx="4.93351" ry="0.915844" fill="#cdcdcd"/><ellipse cx="104.596" cy="120.843" rx="2.52982" ry="0.872291" fill="#d2d2d2"/><ellipse cx="111.179" cy="120.467" rx="3.98896" ry="0.825116" fill="#d4d4d4"/><ellipse cx="118.27" cy="120.299" rx="2.77668" ry="0.925659" fill="#dadada"/><ellipse cx="125.262" cy="120.812" rx="3.46892" ry="1.0796" fill="#d2d2d2"/><ellipse cx="132.167" cy="120.925" rx="3.80839" ry="1.09178" fill="#d7d7d7"/><ellipse cx="139.768" cy="120.285" rx="4.94449" ry="1.10286" fill="#cecece"/><ellipse cx="148.711" cy="120.636" rx="3.5691" ry="1.10583" fill="#cdcdcd"/><ellipse cx="156.927" cy="120.673" rx="4.65134" ry="1.03775" fill="#d2d2d2"/><ellipse cx="166.899" cy="121.023" rx="3.47737" ry="0.989639" fill="#dddddd"/><ellipse cx="175.287" cy="120.606" rx="2.36987" ry="1.19724" fill="#dadada"/><ellipse cx="182.456" cy="120.636" rx="2.99687" ry="0.809025" fill="#d4d4d4"/><ellipse cx="189.367" cy="119.783" rx="2.67054" ry="1.10729" fill="#cecece"/><ellipse cx="194.592" cy="120.92" rx="2.89332" ry="0.832233" fill="#d4d4d4"/><ellipse cx="201.294" cy="120.847" rx="3.73843" ry="1.14559" fill="#dedede"/><ellipse cx="208.75" cy="120.938" rx="3.36283" ry="1.18309" fill="#d3d3d3"/><ellipse cx="215.158" cy="120.027" rx="2.69341" ry="0.993985" fill="#d1d1d1"/><ellipse cx="222.03" cy="120.287" rx="2.93569" ry="0.947701" fill="#cccccc"/><ellipse cx="229.209" cy="120.422" rx="4.86867" ry="1.04704" fill="#dadada"/><ellipse cx="239.866" cy="120.792" rx="2.35118" ry="1.14981" fill="#dedede"/></g></g></g><rect x="11.5" y="79.5" width="82" height="82" fill="none" stroke="#fff" stroke-width="1" opacity=".9"/><path d="M48 120.5h8M52 116.5v8" stroke="#ff0000" stroke-width="1" fill="none"/><path d="M57.5 106.5v15l3.5-3.3 2.7 6 2.4-1.1-2.7-5.8h4.8z" fill="#fff" stroke="#000" stroke-width="1" stroke-linejoin="miter"/></svg></div>
<div class="inp" style="left:507px;top:401.3px;width:230.5px;height:22.6px;"></div>
<div class="inp" style="left:590.2px;top:429px;width:72px;height:24.5px;border-radius:3px"></div>
<div class="btn" style="left:636.2px;top:429px;width:25.8px;height:24.5px;border-radius:0 3px 3px 0"><svg width="24" height="22" style="position:absolute;left:0;top:0"><path d="M8.6 9h7l-3.5 6.4z" fill="#6b665b"/></svg></div>
<div class="btn" style="left:669.3px;top:426px;width:30.6px;height:31px;"><svg width="29" height="29" viewBox="-14.5 -14.5 29 29" style="position:absolute;left:0;top:0"><ellipse cx="0.4" cy="9.3" rx="6.2" ry="1.4" fill="#6f6552" opacity=".5"/><circle cx="0.3" cy="0.4" r="9" fill="#f6931c"/><path d="M-0.8 -3.5 L1.7 -6.2 L3.7 -4.4 L5.9 -5.4 L6.3 1 L3.7 3.6 L0.7 0.4Z" fill="#fbc48a" opacity=".9"/><path d="M-7.1 3.5 a8.6 8.6 0 0 0 14.8 0 q-7.4 3.4 -14.8 0z" fill="#fff" opacity=".28"/><path d="M-5.1 -2.6 L1.3 -0.5 L-0.9 0.7 L2.7 4.6 L1.5 5.8 L-2.2 2 L-3.3 4.3Z" fill="#fff" opacity=".95"/></svg></div>
<div class="inp" style="left:571.3px;top:475.3px;width:67.5px;height:22.4px;"></div>
<div class="inp" style="left:571.3px;top:501.4px;width:67.5px;height:22.4px;"></div>
<div class="inp" style="left:571.3px;top:527.5px;width:67.5px;height:22.4px;"></div>
<div class="btn" style="left:649.2px;top:500.5px;width:44.8px;height:24.3px;"></div>
<div class="inp" style="left:593.9px;top:568.2px;width:53.5px;height:22.7px;"></div>
<div class="hl" style="top:645px;background:#e2dccf"></div><div class="hl" style="top:646px;background:#f5f2ed"></div>
<div class="status" style="left:1px;width:538px"></div>
<div class="status" style="left:542px;width:214px"></div>
<svg class="abs" style="left:743px;top:655px" width="12" height="12"><g fill="#fbfaf7"><rect x="9" y="0" width="2" height="2"/><rect x="6" y="3" width="2" height="2"/><rect x="9" y="3" width="2" height="2"/><rect x="3" y="6" width="2" height="2"/><rect x="6" y="6" width="2" height="2"/><rect x="9" y="6" width="2" height="2"/><rect x="0" y="9" width="2" height="2"/><rect x="3" y="9" width="2" height="2"/><rect x="6" y="9" width="2" height="2"/><rect x="9" y="9" width="2" height="2"/></g></svg>
<div class="t" style="left:3.6px;top:4.1px;letter-spacing:-0.32px;color:#dfdbd2;">File</div>
<div class="t" style="left:33.9px;top:4.1px;letter-spacing:-0.44px;color:#dfdbd2;">Camera</div>
<div class="t" style="left:90.6px;top:4.1px;letter-spacing:-0.05px;color:#dfdbd2;">Display</div>
<div class="t" style="left:145.1px;top:4.1px;letter-spacing:-0.07px;color:#dfdbd2;">Help</div>
<div class="t" style="left:23.0px;top:74.1px;letter-spacing:-0.34px;">Parameters</div>
<div class="t" style="left:23.0px;top:95.1px;letter-spacing:-0.06px;">Line-of-sight axis</div>
<div class="t" style="left:23.2px;top:513.1px;letter-spacing:-0.04px;">Magnifier</div>
<div class="t" style="left:19.6px;top:124.1px;letter-spacing:-0.13px;">3D-view :</div>
<div class="t" style="left:19.4px;top:326.1px;letter-spacing:-0.07px;">Axis shortcuts :</div>
<div class="t" style="left:19.4px;top:412.1px;letter-spacing:-0.12px;">Line-of-sight coordinates :</div>
<div class="t" style="left:78.2px;top:432.1px;letter-spacing:-0.09px;">x :</div>
<div class="t" style="left:98.2px;top:432.1px;letter-spacing:-0.23px;">0.000000</div>
<div class="t" style="left:78.2px;top:457.1px;letter-spacing:-0.09px;">y :</div>
<div class="t" style="left:98.2px;top:457.1px;letter-spacing:-0.23px;">0.000000</div>
<div class="t" style="left:78.2px;top:483.1px;letter-spacing:-0.09px;">z :</div>
<div class="t" style="left:98.2px;top:483.1px;letter-spacing:-0.23px;">1.000000</div>
<div class="t" style="left:243.2px;top:81.1px;letter-spacing:-0.31px;">Region finder</div>
<div class="t" style="left:393.6px;top:83.1px;letter-spacing:-0.62px;color:#1c1c1c;">RT</div>
<div class="t" style="left:680.4px;top:83.1px;letter-spacing:-0.80px;color:#1c1c1c;">TF</div>
<div class="t" style="left:247.1px;top:111.1px;letter-spacing:0.03px;">line-of-sight view</div>
<div class="t" style="left:504.2px;top:111.1px;letter-spacing:0.02px;">u view</div>
<div class="t" style="left:246.7px;top:377.1px;letter-spacing:0.29px;">-v view</div>
<div class="t" style="left:504.4px;top:382.1px;letter-spacing:-0.13px;">Region of interest</div>
<div class="t" style="left:509.7px;top:404.1px;letter-spacing:-0.05px;">/home/labadens</div>
<div class="t" style="left:542.4px;top:433.1px;letter-spacing:-0.25px;">Output</div>
<div class="t" style="left:593.1px;top:433.1px;letter-spacing:-0.68px;">42</div>
<div class="t" style="left:505.7px;top:458.1px;letter-spacing:-0.14px;">Target center coordinates :</div>
<div class="t" style="left:554.6px;top:478.1px;letter-spacing:-0.09px;">x :</div>
<div class="t" style="left:574.7px;top:478.1px;letter-spacing:-0.08px;">0.451103</div>
<div class="t" style="left:554.6px;top:504.1px;letter-spacing:-0.09px;">y :</div>
<div class="t" style="left:574.7px;top:504.1px;letter-spacing:-0.23px;">0.456985</div>
<div class="t" style="left:554.6px;top:530.1px;letter-spacing:-0.09px;">z :</div>
<div class="t" style="left:574.7px;top:530.1px;letter-spacing:-0.23px;">0.499877</div>
<div class="t" style="left:659.1px;top:504.1px;letter-spacing:0.12px;">Edit</div>
<div class="t" style="left:505.7px;top:551.1px;letter-spacing:-0.25px;">Region/Zoom size :</div>
<div class="t" style="left:571.0px;top:571.1px;letter-spacing:0.73px;">L =</div>
<div class="t" style="left:597.2px;top:571.1px;letter-spacing:-0.12px;">2.17</div>
<div class="t" style="left:651.7px;top:571.1px;letter-spacing:0.05px;">kpc</div>
<div class="t" style="left:505.7px;top:591.1px;letter-spacing:0.05px;">Output time :</div>
<div class="t" style="left:573.9px;top:608.1px;letter-spacing:-0.27px;">152.804253 Myr</div>
<div class="t" style="left:7.0px;top:650.1px;letter-spacing:-0.01px;">Left click on two axis views to define a zoom box center (right click = cancel)</div>
<div class="t" style="left:549.2px;top:650.1px;letter-spacing:-0.12px;">Mouse wheel = zoom box size</div>
</body></html>
